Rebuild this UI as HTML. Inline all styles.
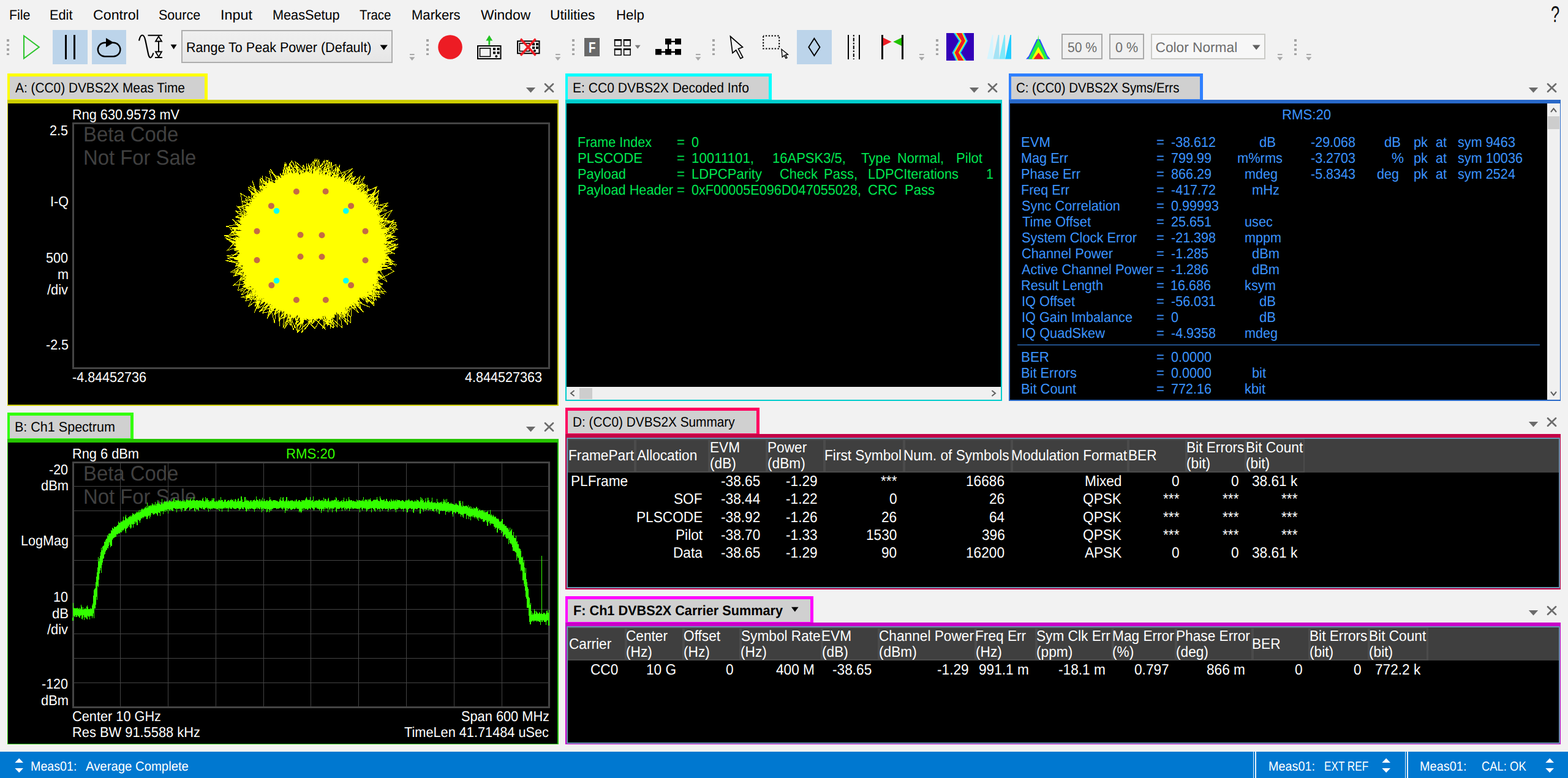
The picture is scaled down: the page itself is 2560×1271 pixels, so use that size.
<!DOCTYPE html>
<html lang="en"><head><meta charset="utf-8"><title>VSA DVBS2X</title><style>
html,body{margin:0;padding:0;}
body{width:2560px;height:1271px;overflow:hidden;background:#f2f2f2;position:relative;font-family:"Liberation Sans",sans-serif;}
.r{position:absolute;display:block;}
.t{position:absolute;white-space:pre;line-height:1;transform-origin:0 0;font-family:"Liberation Sans",sans-serif;text-rendering:geometricPrecision;}
</style></head><body>
<div id="menubar">
<span class="t" style="left:14.79px;top:13px;font-size:22.7px;color:#000;transform:scaleX(0.9434);">File</span>
<span class="t" style="left:80.96px;top:13px;font-size:22.7px;color:#000;transform:scaleX(0.9592);">Edit</span>
<span class="t" style="left:152.04px;top:13px;font-size:22.7px;color:#000;transform:scaleX(1.0229);">Control</span>
<span class="t" style="left:259.23px;top:13px;font-size:22.7px;color:#000;transform:scaleX(0.9470);">Source</span>
<span class="t" style="left:360.10px;top:13px;font-size:22.7px;color:#000;transform:scaleX(1.0282);">Input</span>
<span class="t" style="left:444.97px;top:13px;font-size:22.7px;color:#000;transform:scaleX(0.9551);">MeasSetup</span>
<span class="t" style="left:587.29px;top:13px;font-size:22.7px;color:#000;transform:scaleX(0.8990);">Trace</span>
<span class="t" style="left:671.94px;top:13px;font-size:22.7px;color:#000;transform:scaleX(0.9718);">Markers</span>
<span class="t" style="left:784.59px;top:13px;font-size:22.7px;color:#000;transform:scaleX(1.0050);">Window</span>
<span class="t" style="left:898.49px;top:13px;font-size:22.7px;color:#000;transform:scaleX(1.0055);">Utilities</span>
<span class="t" style="left:1005.92px;top:13px;font-size:22.7px;color:#000;transform:scaleX(0.9812);">Help</span>
<span class="t" style="left:2532.27px;top:5px;font-size:37.2px;color:#111;transform:scaleX(0.6888);">?</span>
</div>
<div id="toolbar">
<div class="r" style="left:11px;top:64px;width:4px;height:3.5px;background:#a3a3a3;"></div>
<div class="r" style="left:11px;top:71.5px;width:4px;height:3.5px;background:#a3a3a3;"></div>
<div class="r" style="left:11px;top:79px;width:4px;height:3.5px;background:#a3a3a3;"></div>
<div class="r" style="left:11px;top:86.5px;width:4px;height:3.5px;background:#a3a3a3;"></div>
<div class="r" style="left:696px;top:64px;width:4px;height:3.5px;background:#a3a3a3;"></div>
<div class="r" style="left:696px;top:71.5px;width:4px;height:3.5px;background:#a3a3a3;"></div>
<div class="r" style="left:696px;top:79px;width:4px;height:3.5px;background:#a3a3a3;"></div>
<div class="r" style="left:696px;top:86.5px;width:4px;height:3.5px;background:#a3a3a3;"></div>
<div class="r" style="left:934px;top:64px;width:4px;height:3.5px;background:#a3a3a3;"></div>
<div class="r" style="left:934px;top:71.5px;width:4px;height:3.5px;background:#a3a3a3;"></div>
<div class="r" style="left:934px;top:79px;width:4px;height:3.5px;background:#a3a3a3;"></div>
<div class="r" style="left:934px;top:86.5px;width:4px;height:3.5px;background:#a3a3a3;"></div>
<div class="r" style="left:1163px;top:64px;width:4px;height:3.5px;background:#a3a3a3;"></div>
<div class="r" style="left:1163px;top:71.5px;width:4px;height:3.5px;background:#a3a3a3;"></div>
<div class="r" style="left:1163px;top:79px;width:4px;height:3.5px;background:#a3a3a3;"></div>
<div class="r" style="left:1163px;top:86.5px;width:4px;height:3.5px;background:#a3a3a3;"></div>
<div class="r" style="left:1528px;top:64px;width:4px;height:3.5px;background:#a3a3a3;"></div>
<div class="r" style="left:1528px;top:71.5px;width:4px;height:3.5px;background:#a3a3a3;"></div>
<div class="r" style="left:1528px;top:79px;width:4px;height:3.5px;background:#a3a3a3;"></div>
<div class="r" style="left:1528px;top:86.5px;width:4px;height:3.5px;background:#a3a3a3;"></div>
<div class="r" style="left:2113px;top:64px;width:4px;height:3.5px;background:#a3a3a3;"></div>
<div class="r" style="left:2113px;top:71.5px;width:4px;height:3.5px;background:#a3a3a3;"></div>
<div class="r" style="left:2113px;top:79px;width:4px;height:3.5px;background:#a3a3a3;"></div>
<div class="r" style="left:2113px;top:86.5px;width:4px;height:3.5px;background:#a3a3a3;"></div>
<svg class="r" style="left:667.5px;top:87px" width="10" height="13" viewBox="0 0 10 13"><rect x="1" y="1" width="7.5" height="2" fill="#a8a8a8"/><path d="M0.2 6.3h9.2l-4.6 5.6z" fill="#a8a8a8"/></svg>
<svg class="r" style="left:906px;top:87px" width="10" height="13" viewBox="0 0 10 13"><rect x="1" y="1" width="7.5" height="2" fill="#a8a8a8"/><path d="M0.2 6.3h9.2l-4.6 5.6z" fill="#a8a8a8"/></svg>
<svg class="r" style="left:1135px;top:87px" width="10" height="13" viewBox="0 0 10 13"><rect x="1" y="1" width="7.5" height="2" fill="#a8a8a8"/><path d="M0.2 6.3h9.2l-4.6 5.6z" fill="#a8a8a8"/></svg>
<svg class="r" style="left:1500px;top:87px" width="10" height="13" viewBox="0 0 10 13"><rect x="1" y="1" width="7.5" height="2" fill="#a8a8a8"/><path d="M0.2 6.3h9.2l-4.6 5.6z" fill="#a8a8a8"/></svg>
<svg class="r" style="left:2085px;top:87px" width="10" height="13" viewBox="0 0 10 13"><rect x="1" y="1" width="7.5" height="2" fill="#a8a8a8"/><path d="M0.2 6.3h9.2l-4.6 5.6z" fill="#a8a8a8"/></svg>
<svg class="r" style="left:2132px;top:87px" width="10" height="13" viewBox="0 0 10 13"><rect x="1" y="1" width="7.5" height="2" fill="#a8a8a8"/><path d="M0.2 6.3h9.2l-4.6 5.6z" fill="#a8a8a8"/></svg>
<svg class="r" style="left:34px;top:52px" width="36" height="50" viewBox="0 0 36 50"><path d="M5 6.5 L29.8 25 L5 43.5 Z" fill="none" stroke="#2fc62f" stroke-width="2.1" stroke-linejoin="miter"/></svg>
<div class="r" style="left:86px;top:49px;width:57px;height:56px;background:#bcd4ea;"></div>
<div class="r" style="left:106px;top:57.3px;width:3.3px;height:39.4px;background:#000;"></div>
<div class="r" style="left:119.8px;top:57.3px;width:3.3px;height:39.4px;background:#000;"></div>
<div class="r" style="left:150px;top:49px;width:56px;height:56px;background:#bcd4ea;"></div>
<svg class="r" style="left:150px;top:49px" width="56" height="56" viewBox="0 0 56 56"><rect x="9.8" y="20.8" width="36.6" height="22.4" rx="11.2" ry="11.2" fill="none" stroke="#000" stroke-width="2.4"/><path d="M23 13 L35.5 20.6 L23 28.2 Z" fill="#000"/></svg>
<svg class="r" style="left:222px;top:52px" width="50" height="50" viewBox="0 0 50 50"><path d="M5 14.5 C7.5 2.5 13 2.5 15.5 14.5 L19.5 33.5 C21.5 44.5 25 45 28.5 34.5" fill="none" stroke="#000" stroke-width="2.2"/><path d="M19.5 5.8h23.5M31 42h12" stroke="#000" stroke-width="2" fill="none"/><path d="M37 14v23" stroke="#000" stroke-width="2" fill="none"/><path d="M37 7.5 L42 15.5 H32 Z M37 41 L42 32.5 H32 Z" fill="#f2f2f2" stroke="#000" stroke-width="1.8"/></svg>
<svg class="r" style="left:278px;top:72px" width="12" height="10" viewBox="0 0 12 10"><path d="M0.6 0.8h10l-5 7.8z" fill="#000"/></svg>
<div class="r" style="left:296px;top:49px;width:345px;height:54px;background:linear-gradient(#f0f0f0,#e6e6e6);box-sizing:border-box;border:2px solid #adadad;"></div>
<span class="t" style="left:303.98px;top:66px;font-size:22.7px;color:#000;transform:scaleX(0.9495);">Range To Peak Power (Default)</span>
<svg class="r" style="left:620px;top:72.5px" width="14" height="10" viewBox="0 0 14 10"><path d="M0.5 0.5h12.4l-6.2 8.3z" fill="#000"/></svg>
<svg class="r" style="left:714px;top:56px" width="42" height="42" viewBox="0 0 42 42"><circle cx="21" cy="21" r="19.8" fill="#ed1c24"/></svg>
<svg class="r" style="left:776px;top:54px" width="46" height="46" viewBox="0 0 46 46"><path d="M22.8 3.5 L28.3 12.6 H24.2 V19.5 H21.4 V12.6 H17.3 Z" fill="#22c322"/><rect x="4" y="21" width="37.5" height="21" fill="none" stroke="#000" stroke-width="2"/><rect x="7.5" y="24.8" width="17" height="13.6" fill="none" stroke="#000" stroke-width="1.6"/><rect x="29" y="24" width="4" height="4" fill="#000"/><rect x="35.5" y="24" width="4" height="4" fill="#000"/><rect x="29" y="30.3" width="4" height="4" fill="#000"/><rect x="35.5" y="30.3" width="4" height="4" fill="#000"/><circle cx="34.3" cy="38" r="2" fill="#000"/></svg>
<svg class="r" style="left:840px;top:58px" width="46" height="38" viewBox="0 0 46 38"><rect x="5" y="9.2" width="35.5" height="20" fill="none" stroke="#000" stroke-width="2"/><rect x="8.3" y="12.8" width="16" height="12.8" fill="none" stroke="#000" stroke-width="1.6"/><rect x="29" y="12.2" width="4" height="4" fill="#000"/><rect x="35" y="12.2" width="4" height="4" fill="#000"/><rect x="29" y="18" width="4" height="4" fill="#000"/><rect x="35" y="18" width="4" height="4" fill="#000"/><circle cx="33" cy="25" r="2" fill="#000"/><path d="M10 5.5 L34.5 32.5 M34.5 5.5 L10 32.5" stroke="#ed1c24" stroke-width="3.6" fill="none"/></svg>
<div class="r" style="left:954px;top:62px;width:25px;height:30px;background:#696969;"></div>
<span class="t" style="left:960.98px;top:67px;font-size:24.7px;color:#fff;font-weight:700;transform:scaleX(0.7621);">F</span>
<svg class="r" style="left:1000px;top:62px" width="32" height="30" viewBox="0 0 32 30"><rect x="3.6" y="2.9" width="10.5" height="10" fill="none" stroke="#000" stroke-width="1.5"/><rect x="2.85" y="2.15" width="12" height="2.6" fill="#000"/><rect x="3.6" y="18" width="10.5" height="10" fill="none" stroke="#000" stroke-width="1.5"/><rect x="2.85" y="17.25" width="12" height="2.6" fill="#000"/><rect x="18.6" y="2.9" width="10.5" height="10" fill="none" stroke="#000" stroke-width="1.5"/><rect x="17.85" y="2.15" width="12" height="2.6" fill="#000"/><rect x="18.6" y="18" width="10.5" height="10" fill="none" stroke="#000" stroke-width="1.5"/><rect x="17.85" y="17.25" width="12" height="2.6" fill="#000"/></svg>
<svg class="r" style="left:1036px;top:73px" width="11" height="8" viewBox="0 0 11 8"><path d="M0.6 0.8h9l-4.5 5.9z" fill="#7a7a7a"/></svg>
<svg class="r" style="left:1068px;top:60px" width="46" height="32" viewBox="0 0 46 32"><rect x="18" y="3" width="10" height="9.6" fill="#000"/><rect x="34" y="3" width="10" height="9.6" fill="#000"/><rect x="2" y="20" width="10" height="9.6" fill="#000"/><rect x="18" y="20" width="10" height="9.6" fill="#000"/><rect x="34" y="20" width="10" height="9.6" fill="#000"/><path d="M23 7.8H40M23 8V25M6 24.8H40" stroke="#000" stroke-width="2.2" fill="none"/></svg>
<svg class="r" style="left:1188px;top:55px" width="30" height="44" viewBox="0 0 30 44"><path d="M4.5 4.5 L24.5 22 L17.5 24.8 L24.8 38.6 L21 40.6 L13.7 26.8 L8 31.6 Z" fill="#f2f2f2" stroke="#000" stroke-width="1.7" stroke-linejoin="miter"/></svg>
<svg class="r" style="left:1243px;top:55px" width="46" height="42" viewBox="0 0 46 42"><rect x="3.2" y="3.4" width="26" height="21" fill="none" stroke="#000" stroke-width="2" stroke-dasharray="2.4 2.45" stroke-dashoffset="1.2"/><path d="M33 25.5 L43.5 34 L39.5 34.6 L42 39.4 L40 40.4 L37.6 35.6 L34.2 38.2 Z" fill="#f2f2f2" stroke="#000" stroke-width="1.4"/></svg>
<div class="r" style="left:1301px;top:49px;width:57px;height:56px;background:#bcd4ea;"></div>
<svg class="r" style="left:1301px;top:49px" width="57" height="56" viewBox="0 0 57 56"><path d="M28.4 13.7 L37.5 27.9 L28.4 42.1 L19.3 27.9 Z" fill="none" stroke="#000" stroke-width="1.9"/></svg>
<div class="r" style="left:1383.8px;top:57px;width:2px;height:39.6px;background:#000;"></div>
<div class="r" style="left:1402.2px;top:57px;width:2px;height:39.6px;background:#000;"></div>
<svg class="r" style="left:1392px;top:56px" width="4" height="42" viewBox="0 0 4 42"><path d="M1.8 1 V41" stroke="#000" stroke-width="2" stroke-dasharray="2.4 2.4 5.6 2.4" fill="none"/></svg>
<div class="r" style="left:1438.5px;top:57px;width:3.2px;height:39.6px;background:#000;"></div>
<div class="r" style="left:1472px;top:57px;width:3.2px;height:39.6px;background:#000;"></div>
<svg class="r" style="left:1441px;top:60px" width="32" height="16" viewBox="0 0 32 16"><path d="M0.7 1.5 L14.5 8.3 L0.7 15 Z" fill="#ed1c24"/><path d="M31 1.5 L17.3 8.3 L31 15 Z" fill="#22c400"/></svg>
<svg class="r" style="left:1545px;top:54px" width="45" height="45" viewBox="0 0 45 45"><rect width="45" height="45" fill="#3300b8"/><path d="M12 0 H29 L35 12.8 L24 32 L32.5 45 H15.5 L9.5 32 L20.5 12.8 Z" fill="#19d3ff"/><path d="M14.8 0 H26.6 L32.5 12.8 L21.5 32 L30 45 H18.2 L12.3 32 L23.3 12.8 Z" fill="#ffff00"/><path d="M16.3 0 H25.2 L31 12.8 L20 32 L28.5 45 H19.6 L13.8 32 L24.8 12.8 Z" fill="#ed1c24"/></svg>
<svg class="r" style="left:1611px;top:56px" width="42" height="42" viewBox="0 0 42 42"><path d="M0.5 40.5 L9 1 H10.5 V40.5 Z" fill="#d5f5ff"/><path d="M10.5 40.5 L18.8 1 H20.3 V40.5 Z" fill="#a4e3f5"/><path d="M20.3 40.5 L28.6 1 H30.1 V40.5 Z" fill="#7ee9fa"/><path d="M30.1 40.5 L38.4 1 H40 V40.5 Z" fill="#22ccff"/></svg>
<svg class="r" style="left:1674px;top:56px" width="42" height="42" viewBox="0 0 42 42"><path d="M1 40.6 L5.5 35.5 L18.6 8 H24 L36 34.5 L40.8 40.6 Z" fill="#2a50ff"/><path d="M5 40.6 L20.4 9 L21.2 0.8 L22 9 L37 40.6 Z" fill="#22ee44"/><path d="M10.5 40.6 L13 36 L21.2 20.5 L29.5 36 L31 40.6 Z" fill="#ffff00"/><path d="M13.5 40.6 L16 37 L21.5 30 L27 37 L29.5 40.6 Z" fill="#ed1c24"/></svg>
<div class="r" style="left:1733px;top:55px;width:67px;height:42px;background:#f0f0f0;box-sizing:border-box;border:2px solid #a9a9a9;"></div>
<span class="t" style="left:1742.85px;top:66px;font-size:22.7px;color:#6d6d6d;transform:scaleX(0.9310);">50 %</span>
<div class="r" style="left:1811px;top:55px;width:57px;height:42px;background:#f0f0f0;box-sizing:border-box;border:2px solid #a9a9a9;"></div>
<span class="t" style="left:1820.84px;top:66px;font-size:22.7px;color:#6d6d6d;transform:scaleX(0.9505);">0 %</span>
<div class="r" style="left:1879px;top:55px;width:187px;height:42px;background:#f7f7f7;box-sizing:border-box;border:2px solid #cacac6;"></div>
<span class="t" style="left:1886.56px;top:66px;font-size:22.7px;color:#6d6d6d;">Color Normal</span>
<svg class="r" style="left:2044px;top:72.5px" width="15" height="10" viewBox="0 0 15 10"><path d="M0.8 0.6h12.8l-6.4 8z" fill="#606060"/></svg>
</div>
<div id="panelA">
<div class="r" style="left:12px;top:120px;width:327px;height:43px;background:#ffff00;"></div>
<div class="r" style="left:16px;top:124.6px;width:318.4px;height:37.2px;background:#d0d0d0;"></div>
<span class="t" style="left:24.70px;top:132px;font-size:22.7px;color:#000;transform:scaleX(0.9190);">A: (CC0) DVBS2X Meas Time</span>
<div class="r" style="left:12px;top:162.8px;width:900px;height:500.2px;background:#cccc00;"></div>
<div class="r" style="left:12px;top:162.8px;width:900px;height:6.2px;background:#cccc00;"></div>
<div class="r" style="left:13px;top:169px;width:897px;height:492px;background:#000;"></div>
<svg class="r" style="left:858px;top:135px" width="50" height="18" viewBox="0 0 50 18"><path d="M0.8 8 H16.2 L8.5 16.4 Z" fill="#6b6b6b"/><path d="M32 2.2 L45 14.8 M45 2.2 L32 14.8" stroke="#6b6b6b" stroke-width="2.7" stroke-linecap="round" fill="none"/></svg>
</div>
<div id="panelB">
<div class="r" style="left:12px;top:674px;width:205.6px;height:43px;background:#33ff0d;"></div>
<div class="r" style="left:16px;top:678.6px;width:197.0px;height:37.2px;background:#d0d0d0;"></div>
<span class="t" style="left:23.68px;top:686px;font-size:22.7px;color:#000;transform:scaleX(0.9489);">B: Ch1 Spectrum</span>
<div class="r" style="left:12px;top:716.8px;width:900px;height:499.20000000000005px;background:#26c400;"></div>
<div class="r" style="left:12px;top:716.8px;width:900px;height:6.2px;background:#26c400;"></div>
<div class="r" style="left:13px;top:723px;width:897px;height:492px;background:#000;"></div>
<svg class="r" style="left:858px;top:689px" width="50" height="18" viewBox="0 0 50 18"><path d="M0.8 8 H16.2 L8.5 16.4 Z" fill="#6b6b6b"/><path d="M32 2.2 L45 14.8 M45 2.2 L32 14.8" stroke="#6b6b6b" stroke-width="2.7" stroke-linecap="round" fill="none"/></svg>
</div>
<div id="panelE">
<div class="r" style="left:923px;top:120px;width:337px;height:43px;background:#00ffff;"></div>
<div class="r" style="left:927px;top:124.6px;width:328.4px;height:37.2px;background:#d0d0d0;"></div>
<span class="t" style="left:935.42px;top:132px;font-size:22.7px;color:#000;transform:scaleX(0.9279);">E: CC0 DVBS2X Decoded Info</span>
<div class="r" style="left:923px;top:162.8px;width:713px;height:492.2px;background:#00cccc;"></div>
<div class="r" style="left:923px;top:162.8px;width:713px;height:6.2px;background:#00cccc;"></div>
<div class="r" style="left:925px;top:169px;width:709px;height:484px;background:#000;"></div>
<svg class="r" style="left:1582px;top:135px" width="50" height="18" viewBox="0 0 50 18"><path d="M0.8 8 H16.2 L8.5 16.4 Z" fill="#6b6b6b"/><path d="M32 2.2 L45 14.8 M45 2.2 L32 14.8" stroke="#6b6b6b" stroke-width="2.7" stroke-linecap="round" fill="none"/></svg>
</div>
<div id="panelC">
<div class="r" style="left:1647px;top:120px;width:317px;height:43px;background:#2f80ff;"></div>
<div class="r" style="left:1651px;top:124.6px;width:308.4px;height:37.2px;background:#d0d0d0;"></div>
<span class="t" style="left:1659.48px;top:132px;font-size:22.7px;color:#000;transform:scaleX(0.8991);">C: (CC0) DVBS2X Syms/Errs</span>
<div class="r" style="left:1647px;top:162.8px;width:901px;height:492.2px;background:#2868c8;"></div>
<div class="r" style="left:1647px;top:162.8px;width:901px;height:6.2px;background:#2868c8;"></div>
<div class="r" style="left:1649px;top:169px;width:898px;height:484px;background:#000;"></div>
<svg class="r" style="left:2495px;top:135px" width="50" height="18" viewBox="0 0 50 18"><path d="M0.8 8 H16.2 L8.5 16.4 Z" fill="#6b6b6b"/><path d="M32 2.2 L45 14.8 M45 2.2 L32 14.8" stroke="#6b6b6b" stroke-width="2.7" stroke-linecap="round" fill="none"/></svg>
</div>
<div id="panelD">
<div class="r" style="left:923px;top:666px;width:317px;height:43px;background:#ff0060;"></div>
<div class="r" style="left:927px;top:670.6px;width:308.4px;height:37.2px;background:#d0d0d0;"></div>
<span class="t" style="left:935.04px;top:678px;font-size:22.7px;color:#000;transform:scaleX(0.9166);">D: (CC0) DVBS2X Summary</span>
<div class="r" style="left:923px;top:708.8px;width:1625px;height:254.20000000000005px;background:#c40046;"></div>
<div class="r" style="left:923px;top:708.8px;width:1625px;height:6.2px;background:#c40046;"></div>
<div class="r" style="left:925px;top:715px;width:1622px;height:246px;background:#000;"></div>
<svg class="r" style="left:2495px;top:681px" width="50" height="18" viewBox="0 0 50 18"><path d="M0.8 8 H16.2 L8.5 16.4 Z" fill="#6b6b6b"/><path d="M32 2.2 L45 14.8 M45 2.2 L32 14.8" stroke="#6b6b6b" stroke-width="2.7" stroke-linecap="round" fill="none"/></svg>
</div>
<div id="panelF">
<div class="r" style="left:923px;top:974px;width:405px;height:43px;background:#ff00ff;"></div>
<div class="r" style="left:927px;top:978.6px;width:396.4px;height:37.2px;background:#d0d0d0;"></div>
<span class="t" style="left:935.69px;top:986px;font-size:22.7px;color:#000;font-weight:700;transform:scaleX(0.9554);">F: Ch1 DVBS2X Carrier Summary</span>
<div class="r" style="left:923px;top:1016.8px;width:1625px;height:199.20000000000005px;background:#c800c8;"></div>
<div class="r" style="left:923px;top:1016.8px;width:1625px;height:6.2px;background:#c800c8;"></div>
<div class="r" style="left:925px;top:1023px;width:1622px;height:192px;background:#000;"></div>
<svg class="r" style="left:2495px;top:989px" width="50" height="18" viewBox="0 0 50 18"><path d="M0.8 8 H16.2 L8.5 16.4 Z" fill="#6b6b6b"/><path d="M32 2.2 L45 14.8 M45 2.2 L32 14.8" stroke="#6b6b6b" stroke-width="2.7" stroke-linecap="round" fill="none"/></svg>
</div>
<svg class="r" style="left:1291px;top:991px" width="14" height="10" viewBox="0 0 14 10"><path d="M1 0.8h11.6l-5.8 7.8z" fill="#000"/></svg>
<div id="decoded">
<span class="t" style="left:943.38px;top:221px;font-size:23.3px;color:#00e650;transform:scaleX(0.9251);">Frame Index</span>
<span class="t" style="left:943.33px;top:247px;font-size:23.3px;color:#00e650;transform:scaleX(0.9519);">PLSCODE</span>
<span class="t" style="left:943.35px;top:273px;font-size:23.3px;color:#00e650;transform:scaleX(0.9382);">Payload</span>
<span class="t" style="left:943.36px;top:299px;font-size:23.3px;color:#00e650;transform:scaleX(0.9336);">Payload Header</span>
<span class="t" style="left:1104.99px;top:221px;font-size:23.3px;color:#00e650;transform:scaleX(0.9554);">=</span>
<span class="t" style="left:1104.99px;top:247px;font-size:23.3px;color:#00e650;transform:scaleX(0.9554);">=</span>
<span class="t" style="left:1104.99px;top:273px;font-size:23.3px;color:#00e650;transform:scaleX(0.9554);">=</span>
<span class="t" style="left:1104.99px;top:299px;font-size:23.3px;color:#00e650;transform:scaleX(0.9554);">=</span>
<span class="t" style="left:1129.24px;top:221px;font-size:23.3px;color:#00e650;transform:scaleX(0.9260);">0</span>
<span class="t" style="left:1129.43px;top:247px;font-size:23.3px;color:#00e650;transform:scaleX(0.9561);">10011101,</span>
<span class="t" style="left:1261.45px;top:247px;font-size:23.3px;color:#00e650;transform:scaleX(0.9453);">16APSK3/5,</span>
<span class="t" style="left:1405.66px;top:247px;font-size:23.3px;color:#00e650;transform:scaleX(0.9502);">Type</span>
<span class="t" style="left:1465.36px;top:247px;font-size:23.3px;color:#00e650;transform:scaleX(0.9318);">Normal,</span>
<span class="t" style="left:1561.33px;top:247px;font-size:23.3px;color:#00e650;transform:scaleX(0.9486);">Pilot</span>
<span class="t" style="left:1129.34px;top:273px;font-size:23.3px;color:#00e650;transform:scaleX(0.9448);">LDPCParity</span>
<span class="t" style="left:1273.01px;top:273px;font-size:23.3px;color:#00e650;transform:scaleX(0.9388);">Check</span>
<span class="t" style="left:1345.34px;top:273px;font-size:23.3px;color:#00e650;transform:scaleX(0.9438);">Pass,</span>
<span class="t" style="left:1417.35px;top:273px;font-size:23.3px;color:#00e650;transform:scaleX(0.9367);">LDPCIterations</span>
<span class="t" style="left:1610.48px;top:273px;font-size:23.3px;color:#00e650;transform:scaleX(0.9260);">1</span>
<span class="t" style="left:1129.23px;top:299px;font-size:23.3px;color:#00e650;transform:scaleX(0.9296);">0xF00005E096D047055028,</span>
<span class="t" style="left:1416.99px;top:299px;font-size:23.3px;color:#00e650;transform:scaleX(0.9509);">CRC</span>
<span class="t" style="left:1477.34px;top:299px;font-size:23.3px;color:#00e650;transform:scaleX(0.9459);">Pass</span>
<div class="r" style="left:925px;top:632px;width:709px;height:21px;background:#f0f0f0;"></div>
<div class="r" style="left:946px;top:633.5px;width:21px;height:18px;background:#cdcdcd;"></div>
<svg class="r" style="left:929px;top:636px" width="12" height="13" viewBox="0 0 12 13"><path d="M8.6 2 L3 6.5 L8.6 11" fill="none" stroke="#606060" stroke-width="2"/></svg>
<svg class="r" style="left:1616px;top:636px" width="12" height="13" viewBox="0 0 12 13"><path d="M3.4 2 L9 6.5 L3.4 11" fill="none" stroke="#606060" stroke-width="2"/></svg>
</div>
<div id="symserrs">
<span class="t" style="left:2093.33px;top:176px;font-size:23.3px;color:#3c94ff;transform:scaleX(0.9517);">RMS:20</span>
<span class="t" style="left:1667.33px;top:221px;font-size:23.3px;color:#3c94ff;transform:scaleX(0.9506);">EVM</span>
<span class="t" style="left:1887.99px;top:221px;font-size:23.3px;color:#3c94ff;transform:scaleX(0.9554);">=</span>
<span class="t" style="left:1912.13px;top:221px;font-size:23.3px;color:#3c94ff;transform:scaleX(0.9237);">-38.612</span>
<span class="t" style="left:2056.22px;top:221px;font-size:23.3px;color:#3c94ff;transform:scaleX(0.9473);">dB</span>
<span class="t" style="left:2140.13px;top:221px;font-size:23.3px;color:#3c94ff;transform:scaleX(0.9237);">-29.068</span>
<span class="t" style="left:2260.22px;top:221px;font-size:23.3px;color:#3c94ff;transform:scaleX(0.9473);">dB</span>
<span class="t" style="left:2307.68px;top:221px;font-size:23.3px;color:#3c94ff;transform:scaleX(0.9346);">pk</span>
<span class="t" style="left:2344.24px;top:221px;font-size:23.3px;color:#3c94ff;transform:scaleX(0.9263);">at</span>
<span class="t" style="left:2380.45px;top:221px;font-size:23.3px;color:#3c94ff;transform:scaleX(0.9305);">sym 9463</span>
<span class="t" style="left:1667.37px;top:247px;font-size:23.3px;color:#3c94ff;transform:scaleX(0.9293);">Mag Err</span>
<span class="t" style="left:1887.99px;top:247px;font-size:23.3px;color:#3c94ff;transform:scaleX(0.9554);">=</span>
<span class="t" style="left:1912.02px;top:247px;font-size:23.3px;color:#3c94ff;transform:scaleX(0.9261);">799.99</span>
<span class="t" style="left:2019.68px;top:247px;font-size:23.3px;color:#3c94ff;transform:scaleX(0.9373);">m%rms</span>
<span class="t" style="left:2140.13px;top:247px;font-size:23.3px;color:#3c94ff;transform:scaleX(0.9237);">-3.2703</span>
<span class="t" style="left:2272.31px;top:247px;font-size:23.3px;color:#3c94ff;transform:scaleX(0.9654);">%</span>
<span class="t" style="left:2307.68px;top:247px;font-size:23.3px;color:#3c94ff;transform:scaleX(0.9346);">pk</span>
<span class="t" style="left:2344.24px;top:247px;font-size:23.3px;color:#3c94ff;transform:scaleX(0.9263);">at</span>
<span class="t" style="left:2380.45px;top:247px;font-size:23.3px;color:#3c94ff;transform:scaleX(0.9300);">sym 10036</span>
<span class="t" style="left:1667.35px;top:273px;font-size:23.3px;color:#3c94ff;transform:scaleX(0.9363);">Phase Err</span>
<span class="t" style="left:1887.99px;top:273px;font-size:23.3px;color:#3c94ff;transform:scaleX(0.9554);">=</span>
<span class="t" style="left:1912.13px;top:273px;font-size:23.3px;color:#3c94ff;transform:scaleX(0.9261);">866.29</span>
<span class="t" style="left:2031.70px;top:273px;font-size:23.3px;color:#3c94ff;transform:scaleX(0.9265);">mdeg</span>
<span class="t" style="left:2140.13px;top:273px;font-size:23.3px;color:#3c94ff;transform:scaleX(0.9237);">-5.8343</span>
<span class="t" style="left:2248.24px;top:273px;font-size:23.3px;color:#3c94ff;transform:scaleX(0.9260);">deg</span>
<span class="t" style="left:2307.68px;top:273px;font-size:23.3px;color:#3c94ff;transform:scaleX(0.9346);">pk</span>
<span class="t" style="left:2344.24px;top:273px;font-size:23.3px;color:#3c94ff;transform:scaleX(0.9263);">at</span>
<span class="t" style="left:2380.45px;top:273px;font-size:23.3px;color:#3c94ff;transform:scaleX(0.9305);">sym 2524</span>
<span class="t" style="left:1667.38px;top:299px;font-size:23.3px;color:#3c94ff;transform:scaleX(0.9246);">Freq Err</span>
<span class="t" style="left:1887.99px;top:299px;font-size:23.3px;color:#3c94ff;transform:scaleX(0.9554);">=</span>
<span class="t" style="left:1912.13px;top:299px;font-size:23.3px;color:#3c94ff;transform:scaleX(0.9237);">-417.72</span>
<span class="t" style="left:2043.68px;top:299px;font-size:23.3px;color:#3c94ff;transform:scaleX(0.9397);">mHz</span>
<span class="t" style="left:1668.12px;top:325px;font-size:23.3px;color:#3c94ff;transform:scaleX(0.9347);">Sync Correlation</span>
<span class="t" style="left:1887.99px;top:325px;font-size:23.3px;color:#3c94ff;transform:scaleX(0.9554);">=</span>
<span class="t" style="left:1912.24px;top:325px;font-size:23.3px;color:#3c94ff;transform:scaleX(0.9261);">0.99993</span>
<span class="t" style="left:1668.66px;top:351px;font-size:23.3px;color:#3c94ff;transform:scaleX(0.9402);">Time Offset</span>
<span class="t" style="left:1887.99px;top:351px;font-size:23.3px;color:#3c94ff;transform:scaleX(0.9554);">=</span>
<span class="t" style="left:1912.02px;top:351px;font-size:23.3px;color:#3c94ff;transform:scaleX(0.9261);">25.651</span>
<span class="t" style="left:2031.68px;top:351px;font-size:23.3px;color:#3c94ff;transform:scaleX(0.9346);">usec</span>
<span class="t" style="left:1668.12px;top:377px;font-size:23.3px;color:#3c94ff;transform:scaleX(0.9368);">System Clock Error</span>
<span class="t" style="left:1887.99px;top:377px;font-size:23.3px;color:#3c94ff;transform:scaleX(0.9554);">=</span>
<span class="t" style="left:1912.13px;top:377px;font-size:23.3px;color:#3c94ff;transform:scaleX(0.9237);">-21.398</span>
<span class="t" style="left:2031.70px;top:377px;font-size:23.3px;color:#3c94ff;transform:scaleX(0.9268);">mppm</span>
<span class="t" style="left:1668.01px;top:403px;font-size:23.3px;color:#3c94ff;transform:scaleX(0.9352);">Channel Power</span>
<span class="t" style="left:1887.99px;top:403px;font-size:23.3px;color:#3c94ff;transform:scaleX(0.9554);">=</span>
<span class="t" style="left:1912.13px;top:403px;font-size:23.3px;color:#3c94ff;transform:scaleX(0.9233);">-1.285</span>
<span class="t" style="left:2044.22px;top:403px;font-size:23.3px;color:#3c94ff;transform:scaleX(0.9392);">dBm</span>
<span class="t" style="left:1668.10px;top:429px;font-size:23.3px;color:#3c94ff;transform:scaleX(0.9379);">Active Channel Power</span>
<span class="t" style="left:1887.99px;top:429px;font-size:23.3px;color:#3c94ff;transform:scaleX(0.9554);">=</span>
<span class="t" style="left:1912.13px;top:429px;font-size:23.3px;color:#3c94ff;transform:scaleX(0.9233);">-1.286</span>
<span class="t" style="left:2044.22px;top:429px;font-size:23.3px;color:#3c94ff;transform:scaleX(0.9392);">dBm</span>
<span class="t" style="left:1667.36px;top:455px;font-size:23.3px;color:#3c94ff;transform:scaleX(0.9319);">Result Length</span>
<span class="t" style="left:1887.99px;top:455px;font-size:23.3px;color:#3c94ff;transform:scaleX(0.9554);">=</span>
<span class="t" style="left:1911.48px;top:455px;font-size:23.3px;color:#3c94ff;transform:scaleX(0.9261);">16.686</span>
<span class="t" style="left:2031.68px;top:455px;font-size:23.3px;color:#3c94ff;transform:scaleX(0.9382);">ksym</span>
<span class="t" style="left:1668.13px;top:481px;font-size:23.3px;color:#3c94ff;transform:scaleX(0.9375);">IQ Offset</span>
<span class="t" style="left:1887.99px;top:481px;font-size:23.3px;color:#3c94ff;transform:scaleX(0.9554);">=</span>
<span class="t" style="left:1912.13px;top:481px;font-size:23.3px;color:#3c94ff;transform:scaleX(0.9237);">-56.031</span>
<span class="t" style="left:2056.22px;top:481px;font-size:23.3px;color:#3c94ff;transform:scaleX(0.9473);">dB</span>
<span class="t" style="left:1668.15px;top:507px;font-size:23.3px;color:#3c94ff;transform:scaleX(0.9317);">IQ Gain Imbalance</span>
<span class="t" style="left:1887.99px;top:507px;font-size:23.3px;color:#3c94ff;transform:scaleX(0.9554);">=</span>
<span class="t" style="left:1912.24px;top:507px;font-size:23.3px;color:#3c94ff;transform:scaleX(0.9260);">0</span>
<span class="t" style="left:2056.22px;top:507px;font-size:23.3px;color:#3c94ff;transform:scaleX(0.9473);">dB</span>
<span class="t" style="left:1668.13px;top:533px;font-size:23.3px;color:#3c94ff;transform:scaleX(0.9376);">IQ QuadSkew</span>
<span class="t" style="left:1887.99px;top:533px;font-size:23.3px;color:#3c94ff;transform:scaleX(0.9554);">=</span>
<span class="t" style="left:1912.13px;top:533px;font-size:23.3px;color:#3c94ff;transform:scaleX(0.9237);">-4.9358</span>
<span class="t" style="left:2031.70px;top:533px;font-size:23.3px;color:#3c94ff;transform:scaleX(0.9265);">mdeg</span>
<div class="r" style="left:1661px;top:562.6px;width:853px;height:1.4px;background:#3c94ff;"></div>
<span class="t" style="left:1667.31px;top:572px;font-size:23.3px;color:#3c94ff;transform:scaleX(0.9601);">BER</span>
<span class="t" style="left:1887.99px;top:572px;font-size:23.3px;color:#3c94ff;transform:scaleX(0.9554);">=</span>
<span class="t" style="left:1912.24px;top:572px;font-size:23.3px;color:#3c94ff;transform:scaleX(0.9261);">0.0000</span>
<span class="t" style="left:1667.35px;top:598px;font-size:23.3px;color:#3c94ff;transform:scaleX(0.9372);">Bit Errors</span>
<span class="t" style="left:1887.99px;top:598px;font-size:23.3px;color:#3c94ff;transform:scaleX(0.9554);">=</span>
<span class="t" style="left:1912.24px;top:598px;font-size:23.3px;color:#3c94ff;transform:scaleX(0.9261);">0.0000</span>
<span class="t" style="left:2043.68px;top:598px;font-size:23.3px;color:#3c94ff;transform:scaleX(0.9346);">bit</span>
<span class="t" style="left:1667.35px;top:624px;font-size:23.3px;color:#3c94ff;transform:scaleX(0.9391);">Bit Count</span>
<span class="t" style="left:1887.99px;top:624px;font-size:23.3px;color:#3c94ff;transform:scaleX(0.9554);">=</span>
<span class="t" style="left:1912.02px;top:624px;font-size:23.3px;color:#3c94ff;transform:scaleX(0.9261);">772.16</span>
<span class="t" style="left:2031.68px;top:624px;font-size:23.3px;color:#3c94ff;transform:scaleX(0.9377);">kbit</span>
<div class="r" style="left:2526px;top:169px;width:21px;height:484px;background:#f0f0f0;"></div>
<div class="r" style="left:2527px;top:190px;width:19px;height:21px;background:#cdcdcd;"></div>
<svg class="r" style="left:2530px;top:174px" width="13" height="12" viewBox="0 0 13 12"><path d="M2 9 L6.5 3.4 L11 9" fill="none" stroke="#606060" stroke-width="2"/></svg>
<svg class="r" style="left:2530px;top:637px" width="13" height="12" viewBox="0 0 13 12"><path d="M2 3 L6.5 8.6 L11 3" fill="none" stroke="#606060" stroke-width="2"/></svg>
</div>
<div id="plotA">
<span class="t" style="left:118.36px;top:176px;font-size:23.3px;color:#fff;transform:scaleX(0.9317);">Rng 630.9573 mV</span>
<span class="t" style="left:81.47px;top:202px;font-size:23.3px;color:#fff;transform:scaleX(0.9262);">2.5</span>
<span class="t" style="left:81.65px;top:318px;font-size:23.3px;color:#fff;transform:scaleX(0.9272);">I-Q</span>
<span class="t" style="left:75.43px;top:410px;font-size:23.3px;color:#fff;transform:scaleX(0.9260);">500</span>
<span class="t" style="left:93.96px;top:437px;font-size:23.3px;color:#fff;transform:scaleX(0.9274);">m</span>
<span class="t" style="left:76.73px;top:462px;font-size:23.3px;color:#fff;transform:scaleX(0.9377);">/div</span>
<span class="t" style="left:74.53px;top:552px;font-size:23.3px;color:#fff;transform:scaleX(0.9215);">-2.5</span>
<span class="t" style="left:118.13px;top:605px;font-size:23.3px;color:#fff;transform:scaleX(0.9246);">-4.84452736</span>
<span class="t" style="left:759.45px;top:605px;font-size:23.3px;color:#fff;transform:scaleX(0.9261);">4.844527363</span>
<svg class="r" style="left:118px;top:200px" width="780" height="403" viewBox="0 0 780 403"><rect x="1.5" y="1.5" width="777" height="400" fill="none" stroke="#444" stroke-width="3"/><circle cx="390.1" cy="201.1" r="116" fill="#ffff00"/><path d="M514.8,201.1 506.7,202.8 508.1,204.6 517.9,206.8 504.7,208.0 511.9,210.2 516.1,212.4 510.8,213.8 512.0,215.8 508.8,217.2 510.2,219.2 510.3,221.1 511.4,223.1 512.3,225.2 510.1,226.6 508.8,228.2 511.1,230.6 502.6,230.4 515.5,235.7 509.0,235.8 501.5,235.5 510.3,240.2 504.9,240.3 505.4,242.4 500.6,242.6 498.4,243.6 498.3,245.4 496.8,246.7 498.3,249.3 497.7,251.0 499.9,254.0 501.3,256.7 496.9,256.5 501.4,261.0 493.9,259.0 490.5,259.1 492.7,262.4 493.4,264.9 487.7,263.4 498.3,272.5 491.3,270.1 490.8,272.0 494.2,276.7 487.5,274.1 488.7,277.3 488.1,279.3 480.7,275.6 479.2,276.6 488.2,286.8 481.8,283.6 480.7,285.2 478.9,286.0 471.4,281.2 474.2,286.5 476.7,291.6 468.2,285.2 466.4,285.9 471.9,294.7 463.8,288.1 464.1,291.1 468.3,299.2 466.5,299.9 458.6,292.5 464.4,303.4 461.9,303.0 455.2,296.6 458.4,304.6 453.4,300.1 452.4,302.0 452.9,306.1 447.4,300.4 446.1,301.5 445.5,304.0 445.8,308.4 444.5,309.9 444.9,315.0 441.4,311.8 438.0,308.7 437.9,313.0 437.2,316.0 434.0,313.0 431.0,310.1 431.1,315.6 428.3,313.0 428.6,319.6 426.3,318.4 424.5,319.0 422.6,318.8 419.3,313.5 419.0,319.4 419.5,330.1 414.3,315.1 412.3,314.0 413.0,327.1 409.0,315.1 407.4,315.9 406.4,321.7 404.5,321.2 402.3,317.1 401.0,322.5 399.1,320.6 397.4,322.9 395.6,324.0 393.6,317.5 391.9,318.3 390.1,330.4 388.3,321.8 386.4,325.0 384.7,321.0 382.8,322.2 381.4,317.6 379.5,319.1 377.3,322.9 375.4,323.3 372.2,333.3 371.8,322.5 370.9,316.9 367.6,325.2 368.0,313.6 365.0,319.2 364.4,313.8 361.7,317.3 361.0,313.0 354.2,331.0 356.7,315.4 355.9,312.1 352.6,316.6 351.4,314.4 350.3,312.2 345.0,321.2 345.3,315.2 346.4,307.7 343.2,310.9 341.6,310.1 341.0,307.1 336.3,312.8 337.5,306.2 335.2,306.9 328.0,316.5 332.6,304.2 330.6,304.1 320.6,317.3 326.6,303.9 328.1,298.1 320.3,306.8 324.2,297.8 324.2,294.7 310.3,310.9 320.9,293.5 317.2,295.3 312.5,298.4 317.2,289.7 311.0,294.4 306.1,297.3 313.2,286.5 309.6,287.8 302.6,292.6 309.7,282.7 306.6,283.3 300.4,286.8 305.7,279.4 304.8,277.9 298.1,281.5 296.1,280.7 300.6,274.7 292.3,279.1 296.2,273.7 295.9,271.7 294.4,270.6 288.1,272.9 294.8,266.0 285.2,270.4 285.8,267.8 284.7,266.3 277.9,268.1 285.6,261.4 287.8,258.2 277.6,261.6 281.7,257.3 286.9,252.7 275.1,256.5 285.6,249.5 277.8,251.1 279.1,248.5 282.0,245.4 279.2,244.6 271.5,245.6 273.9,242.7 278.9,239.1 271.4,239.7 277.6,235.8 278.7,233.6 266.3,235.3 270.6,232.2 273.2,229.6 269.9,228.5 272.1,226.2 268.5,225.0 263.8,224.0 268.4,221.3 268.5,219.4 269.9,217.4 272.8,215.2 272.9,213.4 271.1,211.8 273.9,209.8 266.3,208.5 264.1,206.8 266.4,204.8 267.8,202.9 262.4,201.1 267.3,199.3 265.3,197.4 259.2,195.2 267.4,193.7 273.6,192.4 264.8,189.8 267.5,188.2 275.5,187.3 267.3,184.5 268.4,182.8 273.9,181.8 258.8,177.3 268.8,177.2 277.1,177.1 260.2,171.4 272.1,172.3 272.8,170.6 269.6,167.9 274.9,167.4 276.4,166.0 269.2,161.8 274.1,161.5 273.8,159.4 277.3,158.8 281.4,158.4 283.6,157.4 281.7,154.8 278.0,151.2 284.4,152.1 286.0,150.9 280.8,146.5 287.0,147.6 281.0,142.4 282.8,141.3 282.3,138.9 282.8,137.0 284.8,136.0 289.7,136.9 279.4,128.0 293.1,135.0 289.0,129.9 291.7,129.6 293.7,128.8 292.7,125.8 292.0,122.8 298.5,125.8 295.7,121.1 296.9,119.6 302.4,122.2 303.6,120.8 294.0,109.3 307.9,120.1 303.0,112.7 306.2,113.3 309.3,114.0 308.5,110.5 311.3,110.9 312.7,109.7 312.0,106.1 310.9,101.8 318.9,109.0 316.8,103.3 316.4,99.6 318.9,99.9 319.7,97.9 322.2,98.2 324.5,98.4 324.8,95.4 328.6,98.2 331.3,99.2 330.7,94.5 332.0,93.1 335.1,95.0 335.8,92.6 335.0,86.6 337.6,87.7 341.2,91.3 341.0,86.2 343.1,86.4 346.2,89.3 343.4,76.8 350.3,90.0 350.0,83.6 354.1,90.2 354.9,86.9 355.4,82.2 354.1,70.6 360.0,85.3 360.6,80.4 363.0,82.3 365.0,82.8 366.4,80.6 367.6,77.2 371.0,85.8 372.7,85.4 373.4,77.4 375.9,82.8 378.1,86.7 379.5,83.4 381.0,79.6 382.8,79.1 384.7,81.5 386.5,81.5 388.4,85.2 390.1,69.6 391.8,84.9 393.7,80.7 396.0,70.3 397.4,79.5 399.2,79.6 401.5,74.6 403.1,77.6 403.8,87.3 407.5,72.6 407.2,87.4 408.9,87.9 413.5,72.3 412.4,87.7 414.9,84.6 419.7,71.4 418.0,86.8 420.9,82.6 421.8,86.3 422.6,90.0 425.0,87.9 428.6,82.8 427.5,91.5 429.4,91.5 431.3,91.3 433.0,91.7 435.4,90.5 438.0,89.1 438.4,92.5 442.5,87.9 446.8,83.4 443.4,94.5 443.6,98.0 448.0,93.4 446.5,99.9 447.5,101.7 458.5,86.7 452.4,100.3 453.6,101.7 457.8,98.5 458.6,100.6 458.2,104.4 464.2,99.1 462.3,104.8 459.9,110.9 472.5,97.8 465.0,110.0 468.3,108.9 474.9,104.0 469.6,112.8 469.9,115.1 478.6,108.5 475.8,114.1 478.7,113.8 476.8,118.2 480.5,117.2 481.3,119.0 487.0,116.5 479.9,125.0 486.2,122.1 487.7,123.2 481.9,130.1 482.3,132.0 498.1,122.6 483.6,135.3 487.2,134.9 494.6,132.1 489.5,137.6 495.5,136.0 496.7,137.4 497.7,139.0 495.8,142.2 498.6,142.7 495.1,146.6 498.1,147.1 503.4,146.5 497.2,151.5 498.1,153.0 508.7,150.4 501.1,155.6 499.0,158.3 509.5,156.3 499.1,162.0 505.2,161.8 501.0,165.1 499.7,167.3 508.0,166.6 504.2,169.6 501.0,172.3 503.7,173.4 517.5,172.0 511.4,175.3 512.2,177.1 519.1,177.7 503.5,182.3 512.9,182.6 510.1,184.8 511.5,186.5 512.9,188.2 509.0,190.4 513.4,191.9 512.2,193.8 522.3,195.2 504.5,197.7 504.7,199.4Z" fill="#ffff00"/><path d="M367.8,245.4 390.2,312.8 458.3,227.0 504.7,231.2 431.6,220.5 493.5,286.4 319.4,128.5 331.6,99.7 432.6,194.7 505.1,201.7 356.7,287.5 324.1,304.9 348.8,152.2 348.3,97.5 361.4,140.0 352.0,84.1 333.2,218.3 266.5,235.1 294.4,185.9 310.9,118.1 437.4,195.2 518.1,228.3 471.0,221.3 482.7,281.8 432.9,158.7 427.3,83.5 444.4,115.9 427.5,80.6 469.6,232.8 511.8,277.0 327.2,255.7 334.4,306.2 413.5,242.3 423.3,327.6 315.3,262.0 281.0,248.4 297.3,171.5 257.1,171.7 328.6,276.3 285.2,242.5 414.7,250.1 475.8,284.8 457.3,202.8 510.9,179.0 471.3,176.6 506.5,156.3 463.3,147.8 484.5,108.1 338.7,242.2 280.2,261.3 403.1,249.7 411.0,310.7 439.9,201.2 452.5,299.2 352.7,168.6 315.9,112.0 358.6,237.1 367.9,342.2 430.1,224.9 480.5,271.1 414.1,156.9 420.7,64.1 349.9,190.0 250.9,169.9 445.8,136.9 496.2,152.6 301.4,182.8 323.9,108.9 429.3,105.2 478.8,102.1 400.8,273.6 477.3,271.1 447.4,211.2 488.0,283.1 486.3,161.1 490.0,141.1 400.2,254.6 482.4,266.9 428.4,141.4 365.4,71.1 461.5,243.0 503.8,267.9 429.7,282.9 503.4,270.4 454.8,189.5 527.4,169.7 424.9,236.6 507.3,264.3 447.0,275.2 498.1,266.5 417.9,231.0 419.9,323.0 290.8,184.4 260.6,157.6 389.4,259.8 425.9,318.8 386.1,267.9 428.1,333.9 304.6,151.9 310.7,87.4 315.5,200.3 282.6,232.5 482.0,203.4 508.6,217.9 378.3,126.2 289.5,133.8 450.2,248.1 497.2,242.2 400.3,129.2 464.2,93.6 334.7,154.0 273.5,148.7 318.8,223.0 275.7,282.4 443.3,181.0 423.0,65.1 416.3,160.0 483.0,127.5 465.0,237.9 502.2,281.2 439.0,272.2 349.3,305.7 409.5,300.7 495.5,258.5 484.0,195.1 493.1,142.9 410.4,258.0 432.2,304.4 325.4,178.4 274.6,211.1 485.8,241.8 532.4,198.7 435.4,236.0 497.1,277.9 302.5,247.4 278.6,226.8 449.0,281.2 450.1,313.9 364.5,138.8 349.1,67.5 328.9,132.6 415.0,68.2 330.7,218.8 251.3,185.2 384.7,249.0 351.9,308.1 440.6,217.6 491.1,256.6 393.6,142.7 390.7,88.5 390.0,241.9 380.2,322.4 416.4,266.6 407.7,311.6 295.9,204.0 284.9,260.2 350.5,105.6 316.1,89.2 338.4,236.2 358.2,308.6 469.7,238.8 423.4,308.6 447.5,140.7 498.2,164.5 371.4,268.1 370.6,317.8 464.5,188.2 454.3,327.0 367.0,259.6 414.5,315.1 412.2,270.1 414.5,312.5 445.9,236.2 491.3,248.8 326.2,163.2 309.6,104.1 369.5,106.6 398.1,86.2 376.9,120.8 364.7,69.4 453.0,150.6 518.1,163.3 295.9,198.5 271.9,137.6 305.4,151.9 280.6,135.2 432.6,248.0 467.3,311.0 314.7,172.2 269.4,160.4 416.3,116.8 426.4,85.4 366.2,164.0 365.2,90.1 383.2,148.5 396.8,59.4 325.3,203.6 262.6,196.6 362.0,166.1 278.2,177.6 387.6,141.7 425.8,95.5 350.1,126.5 351.4,93.3 320.3,193.9 285.0,161.1 490.0,187.4 502.4,161.1 433.9,108.4 467.4,116.9 409.1,276.2 293.4,274.1 436.6,186.9 505.8,235.9 401.6,298.3 455.7,291.5 462.0,202.7 499.8,236.5 351.9,287.2 299.2,294.3 415.5,160.8 490.8,121.1 344.6,248.0 327.8,307.4 346.6,252.9 278.7,213.8 367.7,298.9 308.7,281.4 337.9,197.5 286.8,105.0 322.5,128.6 270.7,175.2 381.9,158.9 368.9,84.5 380.4,243.0 443.3,299.9 328.7,211.9 262.9,174.2 356.9,151.9 319.2,107.9 415.2,244.7 496.1,289.8 477.2,143.2 484.3,139.4 406.3,243.8 427.1,306.6 301.6,159.9 309.9,115.0 326.6,239.1 275.7,220.4 437.3,191.4 515.2,194.9 425.3,160.3 420.6,91.5 481.3,174.1 502.1,204.5 474.5,218.3 507.6,224.1 312.3,263.9 285.1,286.7 445.4,191.4 458.2,111.4 471.2,170.0 506.9,141.5 317.0,221.1 259.4,220.1 353.6,154.0 440.9,99.2 334.1,136.9 280.2,178.6 348.5,236.2 312.4,281.4 367.9,267.1 304.6,293.0 395.5,256.6 448.8,314.8 375.5,239.7 387.2,327.6 340.4,114.6 353.4,95.8 354.7,258.1 309.3,280.4 336.8,199.5 305.9,279.7 413.5,151.6 402.7,71.3 337.9,202.5 342.6,93.6 338.5,113.9 364.4,87.1 417.3,234.7 320.3,295.1 468.3,143.2 530.0,168.0 429.8,293.3 452.6,293.7 357.0,145.9 332.6,101.0 378.4,262.5 365.5,310.4 442.2,189.3 524.1,202.2 457.5,222.5 527.4,177.8 412.4,260.4 491.5,248.5 394.6,158.9 452.6,108.4 439.8,173.9 494.5,111.1 467.4,180.2 518.8,210.3 366.6,253.8 277.9,268.0 429.1,186.7 480.8,123.2 488.4,173.9 469.8,119.6 436.8,178.6 517.4,175.0 429.9,120.5 419.5,89.6 399.2,157.1 467.3,96.2 390.8,245.1 465.0,297.4 467.6,131.8 487.9,255.9 449.6,242.1 484.2,273.4 329.1,143.9 350.3,72.4 365.6,160.2 294.6,137.2 386.1,148.6 359.4,91.6 445.7,280.7 501.5,169.5 335.1,198.6 321.4,95.7 436.7,198.5 504.9,269.6 447.3,215.9 478.2,130.2 466.9,188.0 504.8,223.5 384.4,291.0 428.1,306.4 324.0,155.7 310.2,116.4 387.7,279.6 357.3,309.3 451.2,205.5 503.2,194.7 411.3,128.9 453.2,108.6 330.2,247.2 281.5,229.8 340.8,232.3 249.5,188.0 360.8,271.7 272.3,209.3 355.5,240.8 450.0,297.1 488.6,204.7 481.1,103.3 341.1,213.3 274.4,161.7 327.2,124.8 279.0,144.1 425.6,247.2 421.2,336.5 445.8,246.3 492.2,299.3 487.0,165.1 501.5,188.7 448.4,172.1 508.3,160.8 402.3,148.3 384.9,66.6 414.9,155.7 391.1,84.1 430.2,240.1 494.1,291.5 464.1,220.6 493.8,243.5 328.7,157.0 284.4,155.1 321.8,238.4 322.8,307.6 469.5,212.8 498.2,237.1 397.8,111.2 373.3,89.7 437.1,250.0 468.8,289.7 347.5,198.4 277.9,204.0 346.7,198.0 307.7,283.8 436.6,186.3 521.8,143.8 426.1,298.0 525.0,243.3 433.9,175.7 529.3,187.0 392.1,151.1 415.7,89.8 409.9,156.1 458.5,80.4 329.4,198.8 286.5,155.7 443.5,286.3 407.9,337.2 446.0,250.1 399.8,316.7 443.2,146.9 513.8,260.2 345.1,153.6 413.6,89.5 467.5,196.5 513.3,156.2 388.4,158.2 398.1,87.6 323.4,121.7 307.8,105.3 438.7,211.5 505.2,229.1 292.2,193.3 276.2,199.0 453.2,202.1 506.3,192.9 402.6,277.6 451.0,296.5 456.9,276.3 491.8,249.7 457.3,247.0 516.9,237.7 471.8,207.0 501.3,235.2 348.1,146.8 312.0,98.0 461.8,221.3 414.2,312.0 474.7,233.4 489.3,272.3 414.9,276.3 441.1,315.5 410.0,154.0 503.7,181.5 407.9,116.9 457.5,84.5 388.0,131.2 390.7,82.6 394.8,243.1 374.2,330.0 358.0,112.2 304.0,125.8 407.8,129.6 398.2,76.2 442.9,189.4 498.8,174.3 386.2,100.3 427.4,92.0 434.9,159.4 430.3,69.1 337.5,112.3 270.1,139.6 359.2,111.0 305.1,104.1 409.1,278.9 447.0,327.1 415.8,233.9 492.1,296.3 432.1,208.7 505.2,250.8 361.4,118.5 290.5,128.1 431.6,112.8 513.8,143.8 477.2,149.4 493.0,153.3 443.6,125.6 476.5,98.9 350.3,158.2 315.3,117.7 361.7,262.1 379.1,314.4 372.5,285.4 308.6,282.8 437.8,137.0 447.1,98.3 307.0,236.0 295.1,287.2 419.9,166.3 456.1,109.7 443.2,201.5 508.7,279.9 298.4,206.0 269.8,205.6 336.2,277.8 318.1,321.3 367.5,132.7 392.9,76.2 469.8,245.3 520.2,225.0 336.7,239.1 325.5,292.5 421.9,174.4 501.8,176.1 319.3,267.8 336.1,307.0 302.8,183.7 264.4,208.6 443.2,279.2 420.1,327.1 423.3,260.8 404.2,323.0 431.7,164.6 499.3,164.4 362.6,110.8 358.1,93.3 340.1,194.1 295.5,138.9 476.4,187.6 527.8,234.5 481.3,191.9 506.5,223.6 417.1,277.6 438.3,303.4 316.5,255.0 287.3,263.8 342.9,149.5 267.3,182.3 447.0,164.2 519.7,186.2 341.8,227.0 262.7,251.5 440.6,134.1 375.4,83.5 358.9,275.3 327.8,301.0 351.5,160.4 271.0,196.3 342.0,155.3 321.9,79.6 401.6,137.2 496.4,106.7 463.3,218.9 481.8,295.6 452.4,246.8 508.2,252.8 308.8,194.9 319.7,299.4 411.1,282.5 339.2,321.4 464.8,273.1 476.4,272.3 457.1,206.7 497.1,271.3 355.8,246.7 268.3,246.7 408.0,291.0 436.5,304.3 452.3,266.5 513.5,223.7 405.5,302.1 393.5,326.1 429.1,117.0 411.3,88.5 421.8,146.8 439.8,98.4 349.9,240.6 276.8,198.7 379.2,255.7 365.1,317.8 316.8,236.3 284.3,152.1 477.9,233.9 522.0,192.4 449.9,273.3 332.6,296.7 358.8,154.6 335.8,102.7 399.4,290.6 323.9,292.1 438.4,285.9 502.4,270.1 342.0,116.0 355.0,71.5 303.5,184.2 307.0,92.4 336.3,181.8 279.0,181.8 341.8,211.2 272.0,224.8 297.0,177.6 264.8,251.1 342.1,120.0 343.7,93.0 433.6,190.2 504.4,252.9 348.8,109.9 347.7,65.3 318.8,196.4 278.3,209.2 339.4,282.2 405.6,319.3 301.2,186.8 280.9,247.1 417.5,149.1 472.9,117.8 332.5,199.7 263.5,266.1 360.6,253.8 417.5,321.0 329.9,133.3 358.0,76.5 446.7,219.3 502.9,189.7 460.2,163.6 522.0,212.5 330.1,147.3 274.2,157.2 367.5,152.5 342.0,92.5 407.8,239.4 475.5,310.2 354.4,148.3 282.5,124.5 368.4,264.6 368.9,317.1 326.8,123.2 338.2,90.3 418.7,129.6 440.8,94.1 455.0,206.8 501.6,285.9 350.4,225.4 297.5,266.7 413.8,234.4 349.7,321.5 472.2,251.6 403.0,311.8 379.4,146.7 456.6,109.8 368.4,108.5 394.4,89.5 330.6,139.2 290.1,103.6 381.8,161.4 501.6,142.4 408.7,160.1 493.5,123.3 346.4,204.8 301.9,115.6 312.3,232.5 302.9,300.8 344.0,152.5 362.4,72.4 475.7,170.4 461.0,291.3 363.0,111.8 415.8,80.1 483.2,187.9 444.0,99.6 329.7,259.9 259.2,244.4 410.7,146.7 364.4,90.0 429.4,112.1 479.4,100.9 426.6,112.3 481.8,132.5 350.4,110.4 288.0,154.5 303.4,170.9 287.7,120.5 324.3,149.1 291.5,145.0 387.5,289.4 304.4,283.6 397.8,146.8 469.6,88.8 445.6,152.5 492.2,131.6 426.2,278.3 406.3,322.2 329.9,243.2 278.9,215.4 453.9,251.0 479.5,269.8 339.0,165.5 446.8,105.0 437.8,148.0 489.3,144.3 402.4,134.9 477.0,103.1 389.0,243.3 493.1,247.9 427.6,222.7 499.2,119.3 427.4,177.5 503.9,172.0 464.8,270.8 512.8,196.2 358.4,144.0 277.7,190.0 492.2,178.9 499.2,175.4 471.0,144.7 501.0,184.9 409.6,117.6 457.6,75.5 393.2,100.6 404.7,87.4 315.2,152.8 292.2,139.6 339.5,207.0 278.4,185.5 372.2,164.6 459.8,112.1 408.6,299.6 380.2,337.6 434.2,254.0 432.4,333.7 330.8,219.3 314.5,293.6 356.0,165.7 301.6,132.5 449.4,276.9 503.1,234.7 422.3,248.7 425.0,311.2 349.2,290.5 275.4,285.7 482.1,235.3 503.6,195.5 387.5,253.9 374.8,343.0 490.2,199.9 504.2,215.3 381.4,143.0 362.1,93.2 411.9,143.2 458.8,113.1 416.9,263.6 481.6,268.3 346.0,180.0 267.5,153.9 430.2,222.8 508.7,222.2 382.1,253.6 340.1,319.0 403.2,243.2 483.3,272.9 382.4,158.4 431.8,93.4 349.1,202.9 313.9,293.1 429.9,160.0 462.3,88.1 335.8,257.8 289.2,268.0 320.8,225.5 261.5,192.7 352.9,278.5 449.2,317.0 479.8,237.2 507.4,174.0 349.9,191.5 278.1,180.5 409.3,243.4 417.2,331.5 373.5,151.4 356.0,82.4 324.5,167.1 331.5,105.6 436.2,214.5 505.4,166.0 381.2,248.0 458.0,290.6 436.6,262.5 494.9,243.1 436.5,111.9 475.2,119.5 309.9,262.5 345.0,307.5 393.8,262.5 346.6,336.5 427.9,114.3 318.5,103.8 487.3,174.9 488.7,136.2 346.4,192.6 270.9,220.1 438.7,207.5 483.4,293.7 425.6,110.8 401.2,90.2 354.0,156.8 277.8,224.5 349.4,162.4 284.1,148.3 446.0,183.4 514.1,223.5 460.7,181.2 507.6,223.0 341.6,190.7 277.7,192.8 376.8,255.0 308.4,291.5 432.7,134.1 480.7,113.8 316.8,219.4 285.4,143.6 369.4,252.6 403.7,320.7 452.8,205.8 489.2,257.4 322.7,176.2 247.8,185.0 414.2,238.1 360.7,315.5 450.4,225.7 492.2,280.9 475.2,179.0 506.1,197.7 339.7,267.9 283.5,284.4 383.9,113.4 321.0,103.8 408.8,117.5 418.1,92.6 397.8,123.8 399.3,60.3 329.7,171.9 253.7,191.5 323.4,221.6 295.4,266.2 331.3,249.1 286.5,252.4 321.2,201.3 323.0,294.4 437.5,262.0 420.3,308.7 442.4,122.8 431.6,95.9 301.3,245.1 329.6,295.0 469.3,158.0 497.0,105.3 316.9,193.1 278.4,236.9 329.8,282.5 278.8,249.4 442.4,238.4 507.4,165.3 460.0,185.3 487.0,122.4 452.4,199.6 521.6,225.5 482.9,188.5 499.1,228.7 457.0,149.2 528.5,163.9 422.7,249.8 486.6,273.3 409.8,248.8 511.3,228.1 362.1,168.9 460.0,89.3 360.5,280.3 314.0,287.4 364.1,155.4 282.7,142.7 381.9,282.3 440.6,335.1 426.4,235.6 487.1,257.8 431.4,231.0 524.0,193.3 427.8,216.5 503.5,178.2 376.5,139.9 460.4,111.1 335.6,170.3 342.2,94.6 482.3,233.9 525.3,159.1 390.3,243.7 356.1,331.9 351.1,291.0 455.9,295.3 288.4,203.9 307.5,284.0 379.4,148.0 269.3,137.0 392.2,252.1 385.0,313.7 448.1,190.7 478.9,132.3 353.8,226.3 288.5,288.4 356.9,245.9 320.8,292.3 358.2,148.0 339.4,83.6 438.2,232.6 497.4,167.0 407.1,154.0 471.1,100.8 316.9,272.2 330.2,328.2 343.7,215.2 281.0,235.6 453.2,155.2 461.2,112.1 423.5,166.8 454.1,97.7 378.6,290.1 423.2,322.5 355.0,230.0 302.6,304.1 354.2,275.7 381.9,322.9 377.2,243.3 312.8,284.4 450.9,262.5 396.2,318.1 461.2,136.9 431.2,94.5 472.8,216.6 495.4,151.8 372.5,148.0 397.6,85.5 354.4,163.8 286.6,108.9 431.3,211.8 487.9,143.9 368.9,262.0 375.1,315.0 431.2,136.2 426.3,93.1 312.6,234.5 278.1,197.9 380.4,242.6 451.8,308.6 443.5,217.4 501.5,272.5 390.0,155.7 493.2,145.1 388.7,107.7 442.0,102.0 467.0,165.2 500.1,124.2 342.0,151.3 266.4,167.6 433.6,180.1 500.1,179.9 363.1,113.2 437.9,89.3 336.0,185.9 274.7,184.9 345.0,228.9 307.9,277.9 394.3,256.4 474.9,284.0 447.9,176.6 527.5,201.3 343.5,281.2 278.1,268.7 430.6,273.6 437.9,309.9 434.3,239.7 501.0,176.5 444.2,222.6 517.0,219.8 358.3,263.7 331.3,297.2 426.7,218.8 444.9,319.0 466.1,191.6 505.8,233.7 342.2,222.0 280.7,177.2 320.1,129.0 287.4,151.2 391.3,249.9 364.1,329.6 422.1,275.6 486.2,302.0 434.7,280.0 469.9,303.4 417.8,147.2 474.0,112.6 326.0,269.6 378.1,312.0 426.5,123.7 411.3,62.7 317.7,203.6 277.5,225.4 370.9,154.5 323.3,76.2 426.1,223.7 486.3,260.7 441.7,121.1 450.3,99.8 372.9,281.9 399.0,318.4 343.0,120.5 382.1,88.9 370.6,266.8 349.3,309.5 358.9,263.4 304.9,310.0 458.6,124.2 478.9,113.7 354.6,130.2 318.1,101.8 458.2,180.4 464.2,113.3 441.6,210.2 450.2,303.2 461.4,243.2 513.5,201.6 329.7,175.2 304.6,127.2 448.4,153.1 494.6,114.2 334.8,190.3 278.2,151.8 401.4,277.1 428.3,315.4 352.6,225.4 284.7,286.9 308.0,174.2 340.7,100.5 465.4,257.0 483.8,264.1 464.3,182.2 500.0,176.3 395.4,264.8 421.0,320.5 403.8,258.7 355.0,313.5 443.3,146.2 432.9,72.0 433.7,277.7 493.7,281.2 436.2,245.7 530.6,190.5 382.5,159.2 293.4,144.1 466.1,266.0 493.7,249.3 414.2,265.5 424.1,319.1 460.9,259.7 478.7,285.1 369.0,282.7 318.1,287.5 355.8,115.6 308.3,124.9 362.8,242.5 310.4,311.6 428.6,285.6 451.8,300.5 340.4,208.7 278.9,163.5 444.7,229.1 527.9,199.0 353.8,178.4 273.9,210.6 342.1,241.7 286.4,267.6 369.3,236.7 287.8,300.8 362.6,150.6 341.2,91.4 384.3,277.5 361.0,338.8 306.5,167.8 267.5,153.2 335.6,141.1 340.2,98.1 468.2,169.6 417.5,73.5 385.3,128.5 329.2,102.4 447.6,223.9 529.9,232.2 326.7,208.5 280.3,231.8 486.6,205.5 504.8,232.0 335.9,176.3 282.8,168.6 379.0,126.5 420.0,89.4 458.7,164.3 365.5,91.1 333.8,271.4 396.2,336.8 455.2,230.5 494.9,247.7 419.5,250.2 437.4,304.1 347.3,232.2 298.0,301.0 379.7,99.5 349.9,96.8 425.5,111.3 454.6,109.1 448.0,143.9 501.3,177.7 349.0,279.3 356.8,313.5 452.7,224.6 515.1,195.1 353.6,263.0 340.3,303.6 458.5,166.6 491.0,152.5 324.4,144.2 317.7,115.6 395.0,155.8 429.4,90.1 314.1,182.4 264.5,215.8 386.9,144.7 348.5,77.4 399.9,142.1 358.5,62.7 290.0,186.4 282.0,172.1 308.5,213.6 275.9,177.3 392.0,155.5 392.1,89.0 457.6,227.8 467.3,283.6 420.6,242.5 491.0,296.8 412.1,236.6 386.5,314.6 349.2,154.3 306.1,116.7 345.9,289.0 273.1,256.9 311.6,256.4 273.9,240.6 305.9,254.3 280.5,261.3 384.8,268.8 340.4,302.7 394.8,119.9 417.6,60.8 443.3,280.8 384.5,315.0 391.0,108.1 290.2,142.6 434.6,272.4 443.0,307.3 304.5,154.8 253.0,209.0 424.0,162.0 531.2,174.1 377.8,240.6 249.8,225.4 441.4,272.1 450.0,296.5 371.3,159.5 307.0,89.9 431.9,195.8 445.6,81.3 374.3,161.9 326.3,107.1 493.7,214.1 523.7,231.5 442.2,250.1 445.4,305.3 442.7,271.3 385.1,312.9 346.3,258.3 296.5,269.8 455.1,142.7 487.0,259.3 386.0,245.2 441.8,309.8 363.7,231.9 280.2,263.0 317.3,180.6 294.2,95.6 341.2,236.8 338.3,333.1 340.7,243.3 300.9,269.8 312.0,138.6 293.0,123.5 350.3,239.8 282.3,233.1 426.4,177.7 420.5,90.0 344.2,141.2 415.0,61.7 434.4,143.2 477.6,87.7 398.0,281.2 415.1,314.9 311.4,188.1 280.3,237.4 338.2,146.8 295.4,120.5 304.4,215.6 317.6,106.1 399.0,249.3 476.1,286.5 411.6,150.2 430.5,73.9 311.0,221.2 253.8,221.5 321.0,264.6 316.3,285.7 422.1,247.2 436.0,307.7 346.4,214.4 297.4,310.5 366.7,136.3 347.1,76.0 363.0,143.6 314.6,116.0 347.4,245.9 298.6,265.3 438.3,219.3 453.8,296.1 365.1,250.7 410.7,311.0 410.3,265.2 498.4,262.8 360.4,231.9 317.9,292.4 321.3,245.8 325.8,297.6 331.8,252.0 276.9,194.8 332.2,260.6 324.2,291.5 392.6,136.8 469.8,111.2 467.6,213.6 503.1,162.8 425.8,144.7 393.2,64.2 296.8,194.2 265.4,164.3 355.3,225.7 283.5,261.0 430.2,237.6 523.1,186.7 426.8,228.2 417.0,320.3 372.8,132.2 391.6,73.9 322.3,239.4 263.2,243.1 352.9,264.4 344.0,336.1 381.3,257.2 329.6,297.7 322.9,196.5 285.0,248.4 451.8,133.0 470.8,120.3 327.5,186.4 278.8,155.9 335.0,169.2 337.0,101.3 447.4,220.1 507.9,202.5 334.1,177.0 260.1,174.2 415.5,127.2 514.4,136.6 298.8,233.9 283.2,252.2 419.1,167.3 452.7,107.2 457.7,165.5 471.2,112.4 375.1,252.4 432.3,305.2 436.6,174.9 498.9,173.0 318.9,243.2 412.8,337.1 370.5,155.3 453.3,90.3 375.2,253.9 332.6,300.9 343.7,182.6 290.6,142.2 421.8,102.8 397.8,89.9 330.6,256.7 273.0,235.8 380.8,134.1 409.5,90.8 412.8,159.1 515.6,131.3 374.2,261.4 386.6,320.9 431.7,181.5 469.3,90.8 431.8,226.9 525.3,227.8 421.0,156.1 339.9,101.4 333.5,284.8 408.9,311.1 355.6,260.8 287.9,281.3 376.8,243.4 290.1,252.1 303.6,172.2 316.9,107.3 457.3,247.9 481.4,283.6 351.3,252.2 283.9,239.5 343.6,283.2 270.2,202.9 417.4,238.1 497.0,236.0 442.2,248.3 478.9,284.0 326.3,198.4 273.2,187.3 396.2,297.1 364.6,335.7 491.0,210.7 499.8,127.1 401.6,288.7 440.7,303.4 454.4,213.7 498.0,241.1 341.5,175.1 266.4,154.8 379.4,158.6 377.5,78.3 327.5,143.9 303.3,124.2 416.1,136.4 475.0,128.4 351.9,226.2 297.2,291.2 368.5,156.4 353.1,95.1 339.7,291.0 291.2,288.8 318.4,210.2 252.5,217.7 415.5,277.3 503.6,268.7 462.5,248.4 419.2,309.8 388.7,152.6 364.0,64.0 463.2,151.5 456.4,86.3 431.5,120.5 411.3,88.4 462.4,183.1 481.9,265.9 388.9,295.1 408.3,312.6 336.6,215.5 273.8,276.2 319.3,257.9 368.6,326.2 477.6,167.7 458.7,112.6 348.1,267.3 418.4,330.0 461.9,203.1 499.7,226.3 334.9,158.7 278.2,181.2 332.5,276.2 293.9,263.9 369.3,135.9 377.1,69.1 451.4,258.9 471.5,307.1 451.4,184.5 527.1,214.6 314.6,138.8 353.7,86.7 442.3,197.4 500.0,174.9 350.7,194.3 282.7,291.6 389.8,263.7 358.5,318.7 437.7,145.5 524.3,162.2 461.7,237.9 531.6,203.7 336.5,264.1 394.9,317.4 450.5,161.4 500.3,111.1 478.4,234.0 501.4,150.1 457.8,146.2 492.6,156.1 367.8,244.4 283.8,288.2 352.0,181.2 320.4,91.4 353.4,156.1 283.5,157.9 471.5,189.9 512.3,166.0 315.1,270.8 301.2,292.5 306.7,158.7 306.2,121.0 437.0,257.4 464.1,286.1 373.6,241.1 380.2,317.3 490.4,180.1 504.9,212.9 360.6,262.6 352.9,308.8 339.0,241.1 282.6,240.6 300.3,230.0 292.4,113.0 370.4,246.7 424.1,315.2 391.1,143.5 355.4,67.0 332.4,190.4 278.0,178.0 425.7,133.4 436.6,69.2 384.7,256.4 376.1,321.9 311.2,249.1 359.3,311.8 326.9,120.3 319.6,94.9 472.2,169.0 465.8,111.8 411.6,142.5 357.0,69.2 342.3,115.3 322.0,107.5 451.3,227.9 525.1,213.2 326.5,244.9 338.1,325.3 412.7,109.8 422.4,78.9 469.1,142.7 435.2,75.5 332.4,123.3 295.1,115.1 383.1,244.7 454.7,318.1 382.3,254.1 440.3,301.1 410.5,141.4 303.2,130.4 422.4,149.5 481.2,115.6 454.4,226.0 493.9,284.3 481.0,224.1 503.7,193.8 352.6,268.0 366.6,331.0 414.2,292.1 321.9,301.5 461.7,213.9 495.7,238.7 330.5,137.9 273.8,183.4 404.4,296.0 416.5,331.0 449.7,186.4 488.1,146.8 309.2,225.0 274.7,230.7 361.6,244.8 303.3,276.0 321.9,194.2 307.1,103.6 408.9,254.9 330.5,314.1 484.7,169.4 505.5,143.5 439.4,221.5 521.4,237.3 384.6,263.6 461.7,303.5 449.9,197.9 475.8,127.6 413.5,135.9 494.4,159.2 441.5,275.2 368.3,342.2 297.7,214.9 298.4,265.9 322.8,172.9 380.1,87.8 365.0,103.3 377.7,83.7 382.9,136.8 382.4,66.9 407.6,276.8 408.6,311.0 434.1,121.8 483.1,138.8 445.2,227.3 527.3,207.8 308.9,209.0 281.4,166.4 452.4,248.5 495.5,242.9 314.9,222.1 274.2,256.5 383.2,158.4 379.4,84.6 349.9,125.0 310.3,104.0 452.4,277.8 495.0,240.7 397.6,304.5 372.7,316.6 331.3,135.7 278.0,208.2 481.2,187.4 501.8,192.1 406.0,282.8 287.0,272.6 440.0,173.5 488.6,148.0 475.0,186.7 512.7,149.1 428.3,263.4 349.9,326.5 485.4,202.4 492.8,115.4 309.8,199.9 258.9,179.6 333.6,184.6 285.4,161.4 388.8,159.8 353.5,73.3 358.7,158.1 330.2,106.4 464.8,190.0 498.4,171.4 417.1,163.3 350.8,93.3 394.0,151.9 402.2,59.6 432.3,222.5 503.8,250.6 321.0,192.4 283.0,264.4 380.1,110.3 276.3,129.1 381.4,160.2 267.0,144.8 433.3,292.2 391.2,329.0 389.1,260.3 338.2,304.1 472.0,191.3 519.0,224.8 444.4,112.1 449.7,103.6 444.6,208.3 501.3,284.7 347.3,280.0 305.2,308.9 464.2,258.1 515.0,209.4 339.8,256.4 387.3,313.5 292.1,177.1 251.9,187.1 352.1,106.0 323.0,109.8 446.8,205.9 449.4,331.0 420.7,262.0 449.6,313.7 390.6,257.5 485.8,285.5 404.5,255.8 486.3,281.8 320.5,152.2 280.6,176.8 427.5,217.7 463.4,286.4 473.2,185.1 519.2,225.6 410.5,242.7 461.8,294.1 383.8,155.6 320.7,108.4 410.9,164.8 490.0,146.6 362.4,150.4 284.0,161.3 431.7,173.0 479.3,115.9 418.8,237.3 484.4,270.2 345.7,138.5 429.6,96.6 460.3,275.5 469.6,302.5 449.0,270.4 484.5,269.4 391.1,292.4 395.5,317.5 395.2,147.0 360.5,91.8 345.5,146.5 350.1,96.9 341.4,120.7 311.9,121.3 306.6,222.5 279.0,218.7 339.2,207.6 271.4,200.0 344.8,254.8 300.1,283.8 439.2,224.6 419.7,319.6 419.7,164.6 359.5,84.2 393.4,251.8 359.1,309.9 452.3,169.1 497.9,170.1 332.1,218.7 276.5,256.8 461.1,194.1 501.6,211.6 348.0,141.2 318.0,106.1 397.3,272.8 473.2,295.5 446.6,273.6 436.0,322.2 432.5,171.5 458.7,98.2 427.0,175.0 462.1,115.6 422.0,283.4 426.8,336.0 321.4,249.5 270.4,275.0 288.7,193.7 274.9,115.9 351.0,164.0 361.2,91.8 405.3,301.9 407.8,317.0 344.0,270.3 287.1,256.2 469.6,201.2 473.1,286.1 310.3,168.6 360.8,91.3 419.1,240.3 360.9,320.4 423.2,172.7 432.7,96.9 307.9,253.8 300.7,303.1 445.5,185.8 473.8,283.6 422.7,226.0 451.5,297.9 484.6,181.3 505.5,239.1 348.3,141.2 278.8,175.6 347.5,136.0 354.7,68.3 477.4,246.1 494.4,245.1" fill="none" stroke="#ffff00" stroke-width="1" shape-rendering="crispEdges"/><circle cx="365.9" cy="113.0" r="5" fill="#c46a45"/><circle cx="413.6" cy="112.7" r="5" fill="#c46a45"/><circle cx="324.9" cy="136.4" r="5" fill="#c46a45"/><circle cx="455.1" cy="136.4" r="5" fill="#c46a45"/><circle cx="301.5" cy="177.7" r="5" fill="#c46a45"/><circle cx="478.5" cy="177.7" r="5" fill="#c46a45"/><circle cx="372.5" cy="183.7" r="5" fill="#c46a45"/><circle cx="407.5" cy="184.2" r="5" fill="#c46a45"/><circle cx="372.5" cy="219.3" r="5" fill="#c46a45"/><circle cx="407.5" cy="219.5" r="5" fill="#c46a45"/><circle cx="301.5" cy="225.0" r="5" fill="#c46a45"/><circle cx="478.5" cy="225.2" r="5" fill="#c46a45"/><circle cx="325.3" cy="266.1" r="5" fill="#c46a45"/><circle cx="455.1" cy="266.1" r="5" fill="#c46a45"/><circle cx="365.9" cy="290.0" r="5" fill="#c46a45"/><circle cx="413.8" cy="290.0" r="5" fill="#c46a45"/><circle cx="333.5" cy="144.5" r="4.8" fill="#00ffff"/><circle cx="446.8" cy="144.5" r="4.8" fill="#00ffff"/><circle cx="333.5" cy="258.5" r="4.8" fill="#00ffff"/><circle cx="446.8" cy="258.5" r="4.8" fill="#00ffff"/></svg>
<span class="t" style="left:135.57px;top:203px;font-size:34.3px;color:#404040;transform:scaleX(0.9577);">Beta Code</span>
<span class="t" style="left:135.57px;top:241px;font-size:34.3px;color:#404040;transform:scaleX(0.9573);">Not For Sale</span>
</div>
<div id="plotB">
<span class="t" style="left:118.36px;top:730px;font-size:23.3px;color:#fff;transform:scaleX(0.9351);">Rng 6 dBm</span>
<span class="t" style="left:467.33px;top:730px;font-size:23.3px;color:#33ff00;transform:scaleX(0.9517);">RMS:20</span>
<span class="t" style="left:80.36px;top:756px;font-size:23.3px;color:#fff;transform:scaleX(0.9205);">-20</span>
<span class="t" style="left:66.94px;top:782px;font-size:23.3px;color:#fff;transform:scaleX(0.9392);">dBm</span>
<span class="t" style="left:33.98px;top:872px;font-size:23.3px;color:#fff;transform:scaleX(0.9263);">LogMag</span>
<span class="t" style="left:87.41px;top:964px;font-size:23.3px;color:#fff;transform:scaleX(0.9260);">10</span>
<span class="t" style="left:84.77px;top:991px;font-size:23.3px;color:#fff;transform:scaleX(0.9473);">dB</span>
<span class="t" style="left:76.73px;top:1017px;font-size:23.3px;color:#fff;transform:scaleX(0.9377);">/div</span>
<span class="t" style="left:68.39px;top:1106px;font-size:23.3px;color:#fff;transform:scaleX(0.9220);">-120</span>
<span class="t" style="left:66.94px;top:1133px;font-size:23.3px;color:#fff;transform:scaleX(0.9392);">dBm</span>
<span class="t" style="left:118.01px;top:1159px;font-size:23.3px;color:#fff;transform:scaleX(0.9331);">Center 10 GHz</span>
<span class="t" style="left:118.35px;top:1185px;font-size:23.3px;color:#fff;transform:scaleX(0.9383);">Res BW 91.5588 kHz</span>
<span class="t" style="left:752.69px;top:1159px;font-size:23.3px;color:#fff;transform:scaleX(0.9343);">Span 600 MHz</span>
<span class="t" style="left:660.14px;top:1185px;font-size:23.3px;color:#fff;transform:scaleX(0.9327);">TimeLen 41.71484 uSec</span>
<svg class="r" style="left:118px;top:754px" width="780" height="403" viewBox="0 0 780 403"><rect x="1.5" y="1.5" width="777" height="400" fill="none" stroke="#444" stroke-width="3"/><rect x="78" y="3" width="1" height="397" fill="#444"/><rect x="156" y="3" width="1" height="397" fill="#444"/><rect x="234" y="3" width="1" height="397" fill="#444"/><rect x="312" y="3" width="1" height="397" fill="#444"/><rect x="389" y="3" width="1" height="397" fill="#444"/><rect x="467" y="3" width="1" height="397" fill="#444"/><rect x="545" y="3" width="1" height="397" fill="#444"/><rect x="623" y="3" width="1" height="397" fill="#444"/><rect x="701" y="3" width="1" height="397" fill="#444"/><rect x="3" y="40" width="774" height="1" fill="#444"/><rect x="3" y="80" width="774" height="1" fill="#444"/><rect x="3" y="121" width="774" height="1" fill="#444"/><rect x="3" y="161" width="774" height="1" fill="#444"/><rect x="3" y="201" width="774" height="1" fill="#444"/><rect x="3" y="241" width="774" height="1" fill="#444"/><rect x="3" y="281" width="774" height="1" fill="#444"/><rect x="3" y="321" width="774" height="1" fill="#444"/><rect x="3" y="361" width="774" height="1" fill="#444"/></svg>
<span class="t" style="left:135.57px;top:757px;font-size:34.3px;color:#404040;transform:scaleX(0.9577);">Beta Code</span>
<span class="t" style="left:135.57px;top:795px;font-size:34.3px;color:#404040;transform:scaleX(0.9573);">Not For Sale</span>
<svg class="r" style="left:118px;top:754px" width="780" height="403" viewBox="0 0 780 403"><path d="M1.0,260.4 1.4,231.5 1.8,254.9 2.3,239.0 2.7,251.9 3.1,240.4 3.5,252.8 3.9,241.6 4.4,254.3 4.8,239.4 5.2,251.2 5.6,240.0 6.0,251.1 6.5,240.4 6.9,254.3 7.3,238.7 7.7,254.0 8.1,238.6 8.6,251.4 9.0,241.4 9.4,252.7 9.8,241.1 10.2,252.5 10.7,240.0 11.1,254.4 11.5,238.7 11.9,254.8 12.3,241.6 12.8,254.7 13.2,240.0 13.6,251.8 14.0,240.0 14.4,251.2 14.9,234.2 15.3,252.6 15.7,241.1 16.1,258.1 16.5,242.0 17.0,252.3 17.4,238.5 17.8,254.8 18.2,241.9 18.6,251.1 19.1,240.6 19.5,259.4 19.9,241.0 20.3,254.4 20.7,240.5 21.2,253.4 21.6,240.1 22.0,254.6 22.4,240.6 22.8,251.9 23.3,238.5 23.7,257.0 24.1,235.1 24.5,258.1 24.9,240.4 25.4,252.3 25.8,238.1 26.2,253.6 26.6,241.2 27.0,253.3 27.5,240.8 27.9,252.4 28.3,241.1 28.7,257.8 29.1,239.4 29.6,251.8 30.0,241.3 30.4,252.7 30.8,241.8 31.2,252.3 31.7,240.5 32.1,252.5 32.5,235.2 32.9,256.4 33.3,232.7 33.8,250.7 34.2,223.4 34.6,248.1 35.0,218.8 35.4,255.8 35.9,210.5 36.3,240.2 36.7,208.4 37.1,240.0 37.5,206.7 38.0,234.1 38.4,196.7 38.8,228.9 39.2,187.9 39.6,220.6 40.1,186.5 40.5,225.9 40.9,181.0 41.3,202.8 41.7,172.7 42.2,204.9 42.6,155.6 43.0,193.3 43.4,162.7 43.8,190.4 44.3,158.0 44.7,183.1 45.1,156.6 45.5,178.2 45.9,153.7 46.4,173.6 46.8,147.6 47.2,182.4 47.6,141.0 48.0,167.6 48.5,144.8 48.9,168.9 49.3,138.8 49.7,165.2 50.1,142.7 50.6,158.5 51.0,138.5 51.4,157.7 51.8,137.0 52.2,152.3 52.7,131.2 53.1,149.5 53.5,131.1 53.9,150.6 54.3,127.8 54.8,146.4 55.2,127.7 55.6,144.6 56.0,126.2 56.4,143.6 56.9,126.7 57.3,141.3 57.7,120.2 58.1,142.2 58.5,122.3 59.0,136.2 59.4,118.4 59.8,137.8 60.2,117.3 60.6,132.4 61.1,120.1 61.5,136.3 61.9,118.5 62.3,140.4 62.7,117.4 63.2,132.0 63.6,112.2 64.0,137.7 64.4,113.3 64.8,127.1 65.3,107.6 65.7,128.2 66.1,112.5 66.5,125.6 66.9,108.9 67.4,125.1 67.8,109.8 68.2,122.6 68.6,105.9 69.0,124.4 69.5,107.0 69.9,123.1 70.3,107.3 70.7,123.4 71.1,108.4 71.6,122.9 72.0,106.2 72.4,119.0 72.8,106.6 73.2,118.9 73.7,103.8 74.1,118.1 74.5,104.3 74.9,118.8 75.3,98.1 75.8,117.2 76.2,103.3 76.6,118.3 77.0,99.8 77.4,116.9 77.9,99.9 78.3,116.0 78.7,99.7 79.1,114.7 79.5,98.0 80.0,113.2 80.4,98.5 80.8,115.8 81.2,100.1 81.6,112.1 82.1,97.4 82.5,114.3 82.9,96.1 83.3,111.7 83.7,89.9 84.2,110.5 84.6,96.2 85.0,108.7 85.4,96.3 85.8,109.0 86.3,93.4 86.7,113.5 87.1,87.2 87.5,117.0 87.9,94.8 88.4,109.6 88.8,92.9 89.2,109.2 89.6,91.9 90.0,108.1 90.5,94.2 90.9,106.1 91.3,91.1 91.7,104.7 92.1,90.7 92.6,107.2 93.0,92.5 93.4,103.3 93.8,89.5 94.2,104.6 94.7,90.1 95.1,110.3 95.5,88.3 95.9,104.4 96.3,89.9 96.8,108.1 97.2,89.5 97.6,101.8 98.0,88.4 98.4,103.1 98.9,83.7 99.3,108.2 99.7,86.0 100.1,99.6 100.5,85.4 101.0,101.5 101.4,87.5 101.8,98.6 102.2,85.2 102.6,98.4 103.1,87.0 103.5,100.7 103.9,85.0 104.3,98.9 104.7,82.0 105.2,97.1 105.6,83.6 106.0,104.3 106.4,82.4 106.8,97.1 107.3,83.9 107.7,94.5 108.1,81.5 108.5,96.3 108.9,80.1 109.4,96.8 109.8,83.3 110.2,100.4 110.6,79.1 111.0,96.3 111.5,82.1 111.9,94.7 112.3,79.2 112.7,93.2 113.1,77.8 113.6,93.2 114.0,76.9 114.4,91.2 114.8,80.3 115.2,93.4 115.7,78.7 116.1,91.4 116.5,76.9 116.9,90.4 117.3,76.6 117.8,90.8 118.2,76.7 118.6,88.8 119.0,75.5 119.4,90.3 119.9,77.5 120.3,89.7 120.7,72.8 121.1,91.9 121.5,75.7 122.0,93.7 122.4,67.2 122.8,93.6 123.2,76.2 123.6,90.6 124.1,73.7 124.5,89.1 124.9,72.5 125.3,86.7 125.7,72.8 126.2,93.3 126.6,71.8 127.0,89.7 127.4,71.1 127.8,87.5 128.3,74.4 128.7,86.5 129.1,71.2 129.5,84.4 129.9,72.2 130.4,84.3 130.8,68.1 131.2,85.1 131.6,70.3 132.0,86.4 132.5,70.4 132.9,86.9 133.3,71.9 133.7,86.0 134.1,72.2 134.6,85.5 135.0,70.1 135.4,84.3 135.8,66.0 136.2,85.1 136.7,72.1 137.1,85.2 137.5,68.6 137.9,83.3 138.3,69.0 138.8,87.4 139.2,64.6 139.6,88.6 140.0,66.7 140.4,83.3 140.9,71.3 141.3,84.4 141.7,68.9 142.1,83.5 142.5,67.8 143.0,80.9 143.4,70.4 143.8,89.3 144.2,69.7 144.6,80.0 145.1,69.4 145.5,82.0 145.9,67.0 146.3,80.7 146.7,61.2 147.2,81.4 147.6,68.8 148.0,80.7 148.4,69.1 148.8,85.7 149.3,66.3 149.7,81.0 150.1,68.2 150.5,82.2 150.9,63.6 151.4,78.7 151.8,65.7 152.2,81.8 152.6,64.7 153.0,79.2 153.5,64.8 153.9,79.2 154.3,66.6 154.7,80.8 155.1,64.5 155.6,77.5 156.0,66.9 156.4,85.0 156.8,66.8 157.2,78.2 157.7,64.9 158.1,77.2 158.5,62.9 158.9,79.7 159.3,63.7 159.8,80.0 160.2,66.8 160.6,78.3 161.0,65.2 161.4,79.7 161.9,65.4 162.3,79.4 162.7,66.2 163.1,76.2 163.5,64.9 164.0,81.0 164.4,63.9 164.8,79.7 165.2,61.9 165.6,75.8 166.1,59.8 166.5,76.0 166.9,65.6 167.3,77.2 167.7,66.3 168.2,77.8 168.6,62.9 169.0,76.3 169.4,63.5 169.8,77.2 170.3,64.3 170.7,82.5 171.1,62.9 171.5,77.0 171.9,62.8 172.4,77.5 172.8,64.3 173.2,75.9 173.6,62.5 174.0,76.7 174.5,64.5 174.9,76.8 175.3,65.6 175.7,77.1 176.1,63.0 176.6,78.6 177.0,66.1 177.4,77.1 177.8,65.1 178.2,82.4 178.7,64.7 179.1,78.4 179.5,63.6 179.9,78.5 180.3,64.6 180.8,76.1 181.2,62.4 181.6,76.1 182.0,64.9 182.4,75.8 182.9,65.7 183.3,81.4 183.7,63.2 184.1,77.2 184.5,66.0 185.0,80.0 185.4,64.2 185.8,79.9 186.2,62.4 186.6,78.2 187.1,62.2 187.5,77.3 187.9,65.8 188.3,75.5 188.7,62.9 189.2,75.0 189.6,64.0 190.0,75.2 190.4,62.2 190.8,75.3 191.3,65.5 191.7,79.6 192.1,62.4 192.5,78.5 192.9,64.7 193.4,76.6 193.8,60.4 194.2,77.6 194.6,63.8 195.0,76.8 195.5,64.0 195.9,75.6 196.3,62.5 196.7,75.5 197.1,62.8 197.6,75.8 198.0,65.8 198.4,76.4 198.8,57.6 199.2,77.8 199.7,63.4 200.1,81.5 200.5,64.3 200.9,77.1 201.3,64.1 201.8,76.0 202.2,63.7 202.6,78.4 203.0,62.8 203.4,78.5 203.9,65.5 204.3,77.6 204.7,63.5 205.1,78.5 205.5,64.2 206.0,78.1 206.4,64.0 206.8,80.9 207.2,62.8 207.6,75.0 208.1,64.5 208.5,76.2 208.9,63.9 209.3,76.4 209.7,63.3 210.2,75.9 210.6,64.5 211.0,77.3 211.4,63.8 211.8,75.6 212.3,63.7 212.7,75.1 213.1,59.3 213.5,78.3 213.9,63.2 214.4,78.0 214.8,64.3 215.2,75.3 215.6,64.6 216.0,78.2 216.5,65.3 216.9,78.7 217.3,57.8 217.7,75.5 218.1,64.5 218.6,76.4 219.0,63.5 219.4,75.2 219.8,59.9 220.2,77.7 220.7,59.7 221.1,76.4 221.5,62.9 221.9,76.4 222.3,62.6 222.8,82.0 223.2,65.9 223.6,76.8 224.0,65.7 224.4,76.6 224.9,64.0 225.3,78.5 225.7,64.0 226.1,75.9 226.5,65.5 227.0,77.2 227.4,63.1 227.8,78.1 228.2,59.9 228.6,76.0 229.1,62.7 229.5,77.9 229.9,65.5 230.3,76.3 230.7,59.6 231.2,76.3 231.6,60.1 232.0,76.3 232.4,65.0 232.8,77.4 233.3,65.6 233.7,76.5 234.1,65.1 234.5,75.6 234.9,63.7 235.4,77.7 235.8,63.9 236.2,77.2 236.6,65.8 237.0,78.1 237.5,63.8 237.9,78.2 238.3,65.2 238.7,78.5 239.1,62.2 239.6,75.5 240.0,64.7 240.4,81.4 240.8,62.8 241.2,76.8 241.7,64.3 242.1,77.0 242.5,58.2 242.9,76.9 243.3,62.6 243.8,76.9 244.2,62.8 244.6,82.2 245.0,63.2 245.4,76.6 245.9,65.1 246.3,76.9 246.7,65.6 247.1,76.0 247.5,65.3 248.0,75.5 248.4,61.9 248.8,76.6 249.2,64.1 249.6,75.2 250.1,62.5 250.5,76.8 250.9,65.7 251.3,76.0 251.7,65.6 252.2,76.6 252.6,65.0 253.0,75.5 253.4,64.1 253.8,75.6 254.3,63.0 254.7,82.3 255.1,63.1 255.5,76.5 255.9,64.8 256.4,75.4 256.8,65.0 257.2,76.2 257.6,63.2 258.0,77.4 258.5,62.9 258.9,76.9 259.3,61.3 259.7,77.2 260.1,63.1 260.6,78.4 261.0,63.2 261.4,75.0 261.8,63.2 262.2,75.6 262.7,62.3 263.1,76.6 263.5,65.4 263.9,77.3 264.3,65.4 264.8,77.2 265.2,61.8 265.6,77.8 266.0,64.3 266.4,77.1 266.9,60.7 267.3,77.5 267.7,65.9 268.1,76.0 268.5,65.6 269.0,76.3 269.4,64.3 269.8,76.0 270.2,64.3 270.6,76.1 271.1,60.5 271.5,77.0 271.9,63.7 272.3,80.4 272.7,65.3 273.2,75.8 273.6,63.7 274.0,77.6 274.4,64.4 274.8,75.0 275.3,57.3 275.7,77.0 276.1,56.9 276.5,75.4 276.9,59.6 277.4,76.6 277.8,62.5 278.2,74.8 278.6,66.0 279.0,78.1 279.5,65.8 279.9,76.0 280.3,64.9 280.7,75.3 281.1,65.7 281.6,75.0 282.0,58.3 282.4,76.8 282.8,64.1 283.2,75.1 283.7,64.1 284.1,82.2 284.5,62.5 284.9,77.5 285.3,64.5 285.8,80.2 286.2,63.2 286.6,76.6 287.0,64.6 287.4,77.6 287.9,64.2 288.3,79.9 288.7,63.8 289.1,75.7 289.5,65.6 290.0,76.7 290.4,62.6 290.8,76.1 291.2,65.8 291.6,77.7 292.1,63.2 292.5,75.6 292.9,65.3 293.3,77.2 293.7,65.6 294.2,76.6 294.6,64.1 295.0,75.6 295.4,63.5 295.8,78.3 296.3,62.6 296.7,77.5 297.1,65.5 297.5,81.8 297.9,62.4 298.4,78.1 298.8,64.3 299.2,75.6 299.6,64.4 300.0,76.5 300.5,57.2 300.9,76.0 301.3,62.3 301.7,75.1 302.1,65.1 302.6,78.4 303.0,62.6 303.4,76.0 303.8,63.9 304.2,76.3 304.7,64.9 305.1,78.3 305.5,60.9 305.9,75.6 306.3,62.3 306.8,78.3 307.2,65.6 307.6,75.0 308.0,65.0 308.4,78.4 308.9,62.5 309.3,83.4 309.7,64.5 310.1,77.3 310.5,59.1 311.0,74.9 311.4,64.7 311.8,80.3 312.2,63.9 312.6,76.1 313.1,64.2 313.5,76.5 313.9,61.3 314.3,78.0 314.7,64.5 315.2,78.0 315.6,64.6 316.0,74.8 316.4,64.2 316.8,76.5 317.3,63.3 317.7,83.2 318.1,65.3 318.5,81.5 318.9,62.8 319.4,78.1 319.8,65.8 320.2,75.2 320.6,64.3 321.0,77.8 321.5,63.4 321.9,83.3 322.3,57.8 322.7,75.9 323.1,65.9 323.6,81.3 324.0,62.4 324.4,77.5 324.8,63.6 325.2,79.6 325.7,64.0 326.1,75.6 326.5,65.5 326.9,76.5 327.3,63.5 327.8,77.6 328.2,62.7 328.6,75.7 329.0,62.6 329.4,76.3 329.9,63.3 330.3,76.1 330.7,63.0 331.1,75.1 331.5,63.2 332.0,76.3 332.4,64.4 332.8,75.2 333.2,63.7 333.6,78.4 334.1,64.3 334.5,77.1 334.9,64.1 335.3,76.7 335.7,65.3 336.2,75.9 336.6,65.7 337.0,76.5 337.4,65.2 337.8,75.3 338.3,61.3 338.7,75.6 339.1,64.3 339.5,75.9 339.9,62.9 340.4,74.8 340.8,58.0 341.2,76.0 341.6,63.6 342.0,76.7 342.5,64.0 342.9,75.0 343.3,64.6 343.7,78.8 344.1,57.7 344.6,77.0 345.0,63.3 345.4,75.0 345.8,65.1 346.2,75.3 346.7,65.1 347.1,77.9 347.5,65.4 347.9,83.5 348.3,62.8 348.8,77.5 349.2,62.3 349.6,79.6 350.0,58.3 350.4,76.3 350.9,63.1 351.3,80.0 351.7,64.6 352.1,77.3 352.5,63.2 353.0,77.4 353.4,64.1 353.8,77.9 354.2,64.6 354.6,75.7 355.1,66.0 355.5,76.6 355.9,63.8 356.3,78.5 356.7,63.8 357.2,78.2 357.6,62.9 358.0,78.6 358.4,64.5 358.8,77.3 359.3,63.1 359.7,77.9 360.1,64.8 360.5,77.3 360.9,63.9 361.4,77.2 361.8,64.9 362.2,78.2 362.6,64.9 363.0,77.6 363.5,63.5 363.9,77.5 364.3,64.6 364.7,76.5 365.1,63.1 365.6,75.2 366.0,62.4 366.4,77.0 366.8,65.9 367.2,77.2 367.7,64.8 368.1,75.3 368.5,65.0 368.9,77.9 369.3,63.1 369.8,76.8 370.2,62.7 370.6,82.9 371.0,66.0 371.4,80.8 371.9,62.6 372.3,76.0 372.7,64.6 373.1,83.8 373.5,65.7 374.0,81.5 374.4,62.7 374.8,76.1 375.2,62.9 375.6,77.2 376.1,64.5 376.5,79.6 376.9,65.1 377.3,75.6 377.7,63.1 378.2,78.5 378.6,62.6 379.0,75.6 379.4,64.4 379.8,75.0 380.3,63.9 380.7,78.0 381.1,60.3 381.5,78.2 381.9,65.4 382.4,77.2 382.8,57.6 383.2,77.2 383.6,61.3 384.0,79.2 384.5,63.0 384.9,78.1 385.3,63.9 385.7,77.5 386.1,61.7 386.6,75.7 387.0,65.5 387.4,77.0 387.8,62.6 388.2,78.2 388.7,58.0 389.1,78.2 389.5,64.4 389.9,75.2 390.3,64.4 390.8,75.1 391.2,65.9 391.6,75.7 392.0,62.9 392.4,76.6 392.9,64.9 393.3,75.2 393.7,57.2 394.1,80.0 394.5,65.9 395.0,77.5 395.4,63.6 395.8,77.9 396.2,64.5 396.6,75.4 397.1,65.2 397.5,76.0 397.9,63.9 398.3,75.4 398.7,63.4 399.2,77.4 399.6,64.5 400.0,77.1 400.4,64.0 400.8,77.4 401.3,64.0 401.7,76.6 402.1,62.5 402.5,77.9 402.9,63.3 403.4,79.5 403.8,62.3 404.2,77.5 404.6,64.5 405.0,76.9 405.5,64.0 405.9,76.0 406.3,63.7 406.7,83.7 407.1,63.7 407.6,79.8 408.0,62.8 408.4,78.1 408.8,65.6 409.2,76.7 409.7,64.9 410.1,77.0 410.5,59.1 410.9,81.1 411.3,64.0 411.8,76.2 412.2,63.0 412.6,74.8 413.0,61.3 413.4,77.5 413.9,64.6 414.3,76.1 414.7,62.4 415.1,77.2 415.5,64.8 416.0,77.3 416.4,64.1 416.8,75.6 417.2,60.9 417.6,82.9 418.1,58.9 418.5,74.8 418.9,64.9 419.3,78.2 419.7,64.5 420.2,79.0 420.6,65.6 421.0,75.7 421.4,64.3 421.8,76.4 422.3,64.7 422.7,78.1 423.1,65.3 423.5,76.0 423.9,62.9 424.4,83.2 424.8,64.3 425.2,75.5 425.6,62.7 426.0,76.9 426.5,64.0 426.9,76.3 427.3,62.9 427.7,76.9 428.1,62.5 428.6,75.4 429.0,62.8 429.4,75.2 429.8,65.4 430.2,78.6 430.7,57.7 431.1,82.8 431.5,59.8 431.9,78.2 432.3,64.8 432.8,76.5 433.2,62.7 433.6,77.5 434.0,63.4 434.4,76.6 434.9,64.8 435.3,78.3 435.7,65.6 436.1,76.7 436.5,64.7 437.0,76.1 437.4,65.0 437.8,76.0 438.2,65.3 438.6,75.3 439.1,64.0 439.5,76.8 439.9,64.8 440.3,80.8 440.7,62.8 441.2,75.8 441.6,65.6 442.0,74.9 442.4,62.7 442.8,75.9 443.3,58.7 443.7,75.1 444.1,65.4 444.5,78.0 444.9,65.0 445.4,79.9 445.8,64.6 446.2,75.8 446.6,65.0 447.0,76.1 447.5,61.1 447.9,78.2 448.3,64.3 448.7,78.5 449.1,65.1 449.6,76.7 450.0,64.7 450.4,75.7 450.8,63.7 451.2,76.6 451.7,57.7 452.1,76.6 452.5,62.4 452.9,80.9 453.3,64.3 453.8,75.2 454.2,65.0 454.6,76.8 455.0,62.9 455.4,75.1 455.9,65.8 456.3,78.3 456.7,63.5 457.1,75.7 457.5,64.6 458.0,74.9 458.4,64.4 458.8,77.9 459.2,63.7 459.6,76.5 460.1,65.8 460.5,76.7 460.9,65.1 461.3,76.1 461.7,64.9 462.2,76.3 462.6,64.8 463.0,76.7 463.4,65.7 463.8,76.0 464.3,62.4 464.7,77.4 465.1,65.6 465.5,78.3 465.9,63.6 466.4,76.9 466.8,63.5 467.2,78.1 467.6,65.2 468.0,77.0 468.5,62.7 468.9,77.4 469.3,63.4 469.7,83.4 470.1,63.6 470.6,75.5 471.0,64.2 471.4,75.2 471.8,64.4 472.2,77.6 472.7,64.3 473.1,80.0 473.5,61.7 473.9,78.0 474.3,64.0 474.8,77.5 475.2,57.7 475.6,76.0 476.0,64.8 476.4,76.2 476.9,64.8 477.3,77.8 477.7,63.1 478.1,75.7 478.5,62.5 479.0,75.3 479.4,62.5 479.8,77.8 480.2,63.0 480.6,82.1 481.1,63.3 481.5,80.0 481.9,62.2 482.3,78.2 482.7,65.5 483.2,78.4 483.6,62.2 484.0,77.5 484.4,62.5 484.8,74.9 485.3,65.9 485.7,77.0 486.1,60.3 486.5,76.8 486.9,60.8 487.4,75.1 487.8,63.6 488.2,83.4 488.6,64.7 489.0,76.3 489.5,64.9 489.9,75.7 490.3,64.3 490.7,76.2 491.1,64.6 491.6,78.0 492.0,63.0 492.4,78.1 492.8,61.7 493.2,77.7 493.7,63.2 494.1,81.8 494.5,62.2 494.9,77.1 495.3,63.5 495.8,75.7 496.2,62.5 496.6,76.3 497.0,62.9 497.4,77.7 497.9,58.4 498.3,78.9 498.7,64.8 499.1,77.6 499.5,63.8 500.0,76.1 500.4,64.3 500.8,77.3 501.2,65.3 501.6,77.7 502.1,64.1 502.5,81.5 502.9,57.0 503.3,76.2 503.7,63.1 504.2,75.6 504.6,62.3 505.0,77.0 505.4,63.0 505.8,78.0 506.3,62.9 506.7,79.6 507.1,63.5 507.5,78.3 507.9,63.3 508.4,76.8 508.8,62.5 509.2,75.8 509.6,61.8 510.0,75.5 510.5,64.8 510.9,77.9 511.3,65.8 511.7,77.8 512.1,62.7 512.6,77.1 513.0,60.7 513.4,78.3 513.8,64.2 514.2,77.4 514.7,64.2 515.1,75.1 515.5,65.4 515.9,82.0 516.3,65.6 516.8,74.9 517.2,65.4 517.6,76.2 518.0,64.3 518.4,78.0 518.9,64.0 519.3,78.6 519.7,65.8 520.1,78.4 520.5,60.8 521.0,77.7 521.4,62.6 521.8,77.4 522.2,65.1 522.6,77.2 523.1,64.0 523.5,78.4 523.9,65.3 524.3,77.1 524.7,62.5 525.2,76.7 525.6,65.2 526.0,76.5 526.4,63.1 526.8,78.5 527.3,64.6 527.7,78.9 528.1,62.4 528.5,83.3 528.9,62.2 529.4,78.3 529.8,64.8 530.2,76.0 530.6,62.0 531.0,78.2 531.5,62.9 531.9,76.5 532.3,63.0 532.7,76.8 533.1,62.8 533.6,74.9 534.0,62.6 534.4,77.3 534.8,65.0 535.2,75.3 535.7,63.8 536.1,77.8 536.5,65.0 536.9,77.8 537.3,63.8 537.8,77.8 538.2,65.1 538.6,77.7 539.0,62.7 539.4,77.1 539.9,63.8 540.3,81.6 540.7,64.4 541.1,78.3 541.5,65.3 542.0,76.8 542.4,66.0 542.8,75.9 543.2,65.0 543.6,76.2 544.1,64.2 544.5,78.0 544.9,62.7 545.3,77.7 545.7,63.5 546.2,75.8 546.6,63.8 547.0,83.1 547.4,62.9 547.8,75.6 548.3,63.3 548.7,77.5 549.1,61.0 549.5,78.4 549.9,63.3 550.4,75.8 550.8,62.9 551.2,76.5 551.6,64.7 552.0,76.2 552.5,64.0 552.9,75.9 553.3,63.7 553.7,77.7 554.1,63.5 554.6,78.1 555.0,65.2 555.4,76.7 555.8,63.6 556.2,82.3 556.7,64.8 557.1,84.3 557.5,65.9 557.9,79.1 558.3,65.4 558.8,78.9 559.2,62.9 559.6,76.8 560.0,65.2 560.4,77.0 560.9,65.4 561.3,77.6 561.7,64.8 562.1,77.6 562.5,61.9 563.0,75.6 563.4,63.4 563.8,77.9 564.2,63.5 564.6,76.4 565.1,65.8 565.5,75.8 565.9,63.9 566.3,76.1 566.7,66.0 567.2,77.9 567.6,64.7 568.0,84.5 568.4,58.0 568.8,77.6 569.3,63.3 569.7,76.6 570.1,64.2 570.5,76.6 570.9,58.6 571.4,78.3 571.8,64.6 572.2,76.2 572.6,63.9 573.0,78.7 573.5,63.1 573.9,81.7 574.3,67.0 574.7,76.7 575.1,65.9 575.6,77.1 576.0,66.6 576.4,79.8 576.8,59.8 577.2,77.1 577.7,65.3 578.1,79.2 578.5,66.9 578.9,79.4 579.3,59.2 579.8,79.0 580.2,64.8 580.6,76.4 581.0,63.7 581.4,79.8 581.9,59.4 582.3,79.0 582.7,67.4 583.1,78.1 583.5,65.8 584.0,77.3 584.4,66.8 584.8,79.7 585.2,66.5 585.6,78.4 586.1,65.1 586.5,78.4 586.9,66.1 587.3,80.5 587.7,59.5 588.2,79.2 588.6,67.3 589.0,79.7 589.4,67.0 589.8,81.2 590.3,66.7 590.7,82.2 591.1,67.4 591.5,78.0 591.9,67.1 592.4,77.2 592.8,66.3 593.2,79.8 593.6,68.1 594.0,78.2 594.5,67.7 594.9,79.9 595.3,61.3 595.7,82.6 596.1,65.6 596.6,78.1 597.0,65.8 597.4,78.9 597.8,66.9 598.2,81.5 598.7,68.1 599.1,86.4 599.5,66.7 599.9,79.3 600.3,67.2 600.8,79.6 601.2,65.7 601.6,80.9 602.0,67.4 602.4,79.5 602.9,68.3 603.3,79.5 603.7,65.3 604.1,79.9 604.5,68.9 605.0,81.3 605.4,65.8 605.8,78.7 606.2,61.4 606.6,79.6 607.1,66.9 607.5,79.9 607.9,63.5 608.3,79.6 608.7,66.7 609.2,86.8 609.6,61.9 610.0,82.4 610.4,67.8 610.8,81.0 611.3,61.3 611.7,82.2 612.1,67.6 612.5,82.0 612.9,67.5 613.4,79.5 613.8,66.2 614.2,80.3 614.6,66.5 615.0,82.7 615.5,69.3 615.9,82.7 616.3,68.5 616.7,80.1 617.1,68.6 617.6,82.3 618.0,68.8 618.4,80.1 618.8,67.0 619.2,81.4 619.7,69.1 620.1,80.9 620.5,69.4 620.9,86.0 621.3,68.7 621.8,89.6 622.2,71.1 622.6,82.5 623.0,69.9 623.4,81.7 623.9,70.9 624.3,82.8 624.7,70.6 625.1,84.6 625.5,68.0 626.0,84.0 626.4,70.2 626.8,82.8 627.2,68.5 627.6,81.7 628.1,70.2 628.5,81.8 628.9,71.2 629.3,83.2 629.7,71.0 630.2,85.6 630.6,71.9 631.0,83.2 631.4,63.9 631.8,85.3 632.3,64.6 632.7,84.9 633.1,71.7 633.5,85.9 633.9,64.5 634.4,89.9 634.8,73.2 635.2,86.1 635.6,72.2 636.0,86.6 636.5,73.9 636.9,85.5 637.3,64.8 637.7,90.1 638.1,72.0 638.6,91.7 639.0,73.3 639.4,86.3 639.8,74.2 640.2,85.2 640.7,73.2 641.1,85.5 641.5,72.7 641.9,84.8 642.3,72.4 642.8,85.4 643.2,72.1 643.6,94.1 644.0,72.8 644.4,87.8 644.9,73.3 645.3,87.7 645.7,74.3 646.1,88.3 646.5,70.6 647.0,88.7 647.4,76.3 647.8,94.1 648.2,74.5 648.6,89.5 649.1,73.3 649.5,89.6 649.9,74.5 650.3,95.5 650.7,76.6 651.2,90.3 651.6,74.1 652.0,87.4 652.4,76.6 652.8,89.0 653.3,75.9 653.7,90.8 654.1,77.7 654.5,88.2 654.9,77.9 655.4,90.5 655.8,75.2 656.2,89.7 656.6,76.1 657.0,91.2 657.5,77.0 657.9,92.5 658.3,76.4 658.7,90.3 659.1,74.2 659.6,91.2 660.0,73.8 660.4,92.5 660.8,79.8 661.2,95.0 661.7,77.2 662.1,91.8 662.5,75.7 662.9,92.0 663.3,80.6 663.8,96.5 664.2,81.1 664.6,90.9 665.0,79.1 665.4,93.4 665.9,77.8 666.3,92.8 666.7,80.1 667.1,94.5 667.5,80.3 668.0,93.5 668.4,78.7 668.8,94.0 669.2,79.7 669.6,94.0 670.1,81.6 670.5,98.2 670.9,79.2 671.3,98.9 671.7,81.5 672.2,97.2 672.6,82.7 673.0,97.5 673.4,80.1 673.8,96.9 674.3,82.7 674.7,95.5 675.1,83.2 675.5,96.4 675.9,84.4 676.4,98.9 676.8,82.4 677.2,96.3 677.6,82.5 678.0,104.6 678.5,80.5 678.9,98.2 679.3,86.0 679.7,99.3 680.1,85.7 680.6,96.8 681.0,86.2 681.4,100.6 681.8,86.5 682.2,103.8 682.7,79.1 683.1,100.7 683.5,87.9 683.9,100.2 684.3,85.8 684.8,102.4 685.2,87.7 685.6,101.2 686.0,89.7 686.4,101.5 686.9,90.2 687.3,102.1 687.7,87.1 688.1,102.5 688.5,88.9 689.0,106.0 689.4,90.6 689.8,107.3 690.2,90.3 690.6,110.0 691.1,90.3 691.5,107.5 691.9,90.1 692.3,108.2 692.7,92.8 693.2,106.0 693.6,92.9 694.0,116.0 694.4,94.3 694.8,107.7 695.3,92.9 695.7,109.5 696.1,95.1 696.5,109.4 696.9,96.9 697.4,112.2 697.8,98.0 698.2,111.6 698.6,98.1 699.0,111.6 699.5,97.6 699.9,112.0 700.3,96.7 700.7,116.7 701.1,99.3 701.6,113.2 702.0,94.1 702.4,114.9 702.8,99.5 703.2,123.4 703.7,101.6 704.1,116.3 704.5,103.1 704.9,120.6 705.3,101.9 705.8,120.2 706.2,104.9 706.6,118.5 707.0,105.6 707.4,122.6 707.9,105.5 708.3,124.8 708.7,104.9 709.1,125.5 709.5,108.2 710.0,125.9 710.4,108.8 710.8,124.0 711.2,107.8 711.6,124.6 712.1,111.0 712.5,134.8 712.9,113.7 713.3,126.8 713.7,115.3 714.2,132.7 714.6,108.0 715.0,129.2 715.4,114.1 715.8,133.6 716.3,117.0 716.7,133.5 717.1,110.1 717.5,135.6 717.9,117.2 718.4,140.0 718.8,119.6 719.2,139.3 719.6,120.8 720.0,145.8 720.5,115.4 720.9,141.7 721.3,124.2 721.7,146.3 722.1,127.6 722.6,146.6 723.0,125.2 723.4,147.6 723.8,130.7 724.2,149.2 724.7,120.9 725.1,148.5 725.5,131.2 725.9,161.3 726.3,130.4 726.8,155.3 727.2,135.1 727.6,157.9 728.0,134.9 728.4,157.3 728.9,141.1 729.3,164.5 729.7,141.8 730.1,162.5 730.5,141.8 731.0,168.4 731.4,143.0 731.8,168.1 732.2,146.1 732.6,178.6 733.1,156.4 733.5,177.0 733.9,158.2 734.3,178.9 734.7,157.1 735.2,187.3 735.6,154.6 736.0,194.3 736.4,165.2 736.8,192.5 737.3,160.6 737.7,199.6 738.1,173.0 738.5,204.1 738.9,176.8 739.4,210.5 739.8,185.2 740.2,216.1 740.6,173.8 741.0,221.2 741.5,191.6 741.9,224.3 742.3,197.5 742.7,239.2 743.1,204.7 743.6,239.2 744.0,208.2 744.4,239.2 744.8,214.4 745.2,248.4 745.7,220.6 746.1,255.1 746.5,223.0 746.9,261.7 747.3,233.8 747.8,266.1 748.2,231.2 748.6,265.8 749.0,244.4 749.4,261.2 749.9,248.9 750.3,262.0 750.7,249.6 751.1,258.9 751.5,246.6 752.0,260.2 752.4,249.6 752.8,259.9 753.2,248.5 753.6,261.9 754.1,246.7 754.5,259.6 754.9,240.7 755.3,260.4 755.7,246.9 756.2,260.0 756.6,249.3 757.0,260.2 757.4,243.9 757.8,259.0 758.3,246.0 758.7,261.5 759.1,247.4 759.5,260.4 759.9,249.2 760.4,260.6 760.8,248.9 761.2,261.0 761.6,247.9 762.0,261.0 762.5,246.2 762.9,261.6 763.3,247.2 763.7,262.3 764.1,249.2 764.6,267.1 765.0,248.9 765.4,259.0 765.8,247.8 766.2,262.2 766.7,247.3 767.1,262.2 767.5,248.6 767.9,260.0 768.3,249.4 768.8,258.7 769.2,248.9 769.6,259.6 770.0,247.1 770.4,261.8 770.9,249.3 771.3,262.4 771.7,247.7 772.1,262.2 772.5,249.6 773.0,261.7 773.4,247.9 773.8,267.2 774.2,248.3 774.6,260.7 775.1,242.7 775.5,258.6 775.9,246.7 776.3,260.0 776.7,247.2 777.2,260.7 777.6,247.2 778.0,267.5 778.4,242.0" fill="none" stroke="#33ff00" stroke-width="1.1" stroke-linejoin="bevel" shape-rendering="crispEdges"/><rect x="766.0" y="154" width="1" height="96" fill="#33ff00"/></svg>
</div>
<div id="tableD">
<div class="r" style="left:925px;top:714.8px;width:1622px;height:246.20000000000005px;background:#6a97b2;"></div>
<div class="r" style="left:927px;top:716.8px;width:1618px;height:242.20000000000005px;background:#000;"></div>
<div class="r" style="left:927px;top:716.8px;width:1618px;height:55.200000000000045px;background:#4b4b4b;"></div>
<div class="r" style="left:929px;top:719.0999999999999px;width:106px;height:50.700000000000045px;background:#3f3f3f;"></div>
<div class="r" style="left:1039px;top:719.0999999999999px;width:117px;height:50.700000000000045px;background:#3f3f3f;"></div>
<div class="r" style="left:1160px;top:719.0999999999999px;width:90px;height:50.700000000000045px;background:#3f3f3f;"></div>
<div class="r" style="left:1254px;top:719.0999999999999px;width:89.5px;height:50.700000000000045px;background:#3f3f3f;"></div>
<div class="r" style="left:1347.5px;top:719.0999999999999px;width:126.0px;height:50.700000000000045px;background:#3f3f3f;"></div>
<div class="r" style="left:1477.5px;top:719.0999999999999px;width:172.0px;height:50.700000000000045px;background:#3f3f3f;"></div>
<div class="r" style="left:1653.5px;top:719.0999999999999px;width:186.5px;height:50.700000000000045px;background:#3f3f3f;"></div>
<div class="r" style="left:1844px;top:719.0999999999999px;width:90.5px;height:50.700000000000045px;background:#3f3f3f;"></div>
<div class="r" style="left:1938.5px;top:719.0999999999999px;width:93.0px;height:50.700000000000045px;background:#3f3f3f;"></div>
<div class="r" style="left:2035.5px;top:719.0999999999999px;width:92.0px;height:50.700000000000045px;background:#3f3f3f;"></div>
<div class="r" style="left:2130.0px;top:716.8px;width:415.0px;height:55.200000000000045px;background:#3f3f3f;"></div>
<span class="t" style="left:927.99px;top:733px;font-size:24.4px;color:#fff;transform:scaleX(0.9291);">FramePart</span>
<span class="t" style="left:1039.50px;top:733px;font-size:24.4px;color:#fff;transform:scaleX(0.9291);">Allocation</span>
<span class="t" style="left:1158.69px;top:720px;font-size:24.4px;color:#fff;transform:scaleX(0.9291);">EVM</span>
<span class="t" style="left:1159.14px;top:746px;font-size:24.4px;color:#fff;transform:scaleX(0.9291);">(dB)</span>
<span class="t" style="left:1252.69px;top:720px;font-size:24.4px;color:#fff;transform:scaleX(0.9291);">Power</span>
<span class="t" style="left:1253.14px;top:746px;font-size:24.4px;color:#fff;transform:scaleX(0.9291);">(dBm)</span>
<span class="t" style="left:1346.19px;top:733px;font-size:24.4px;color:#fff;transform:scaleX(0.9291);">First Symbol</span>
<span class="t" style="left:1475.19px;top:733px;font-size:24.4px;color:#fff;transform:scaleX(0.9291);">Num. of Symbols</span>
<span class="t" style="left:1650.89px;top:733px;font-size:24.4px;color:#fff;transform:scaleX(0.9291);">Modulation Format</span>
<span class="t" style="left:1842.49px;top:733px;font-size:24.4px;color:#fff;transform:scaleX(0.9291);">BER</span>
<span class="t" style="left:1936.59px;top:720px;font-size:24.4px;color:#fff;transform:scaleX(0.9291);">Bit Errors</span>
<span class="t" style="left:1937.04px;top:746px;font-size:24.4px;color:#fff;transform:scaleX(0.9291);">(bit)</span>
<span class="t" style="left:2033.69px;top:720px;font-size:24.4px;color:#fff;transform:scaleX(0.9291);">Bit Count</span>
<span class="t" style="left:2034.14px;top:746px;font-size:24.4px;color:#fff;transform:scaleX(0.9291);">(bit)</span>
<span class="t" style="left:932.19px;top:775px;font-size:24.4px;color:#fff;transform:scaleX(0.9291);">PLFrame</span>
<span class="t" style="left:1176.72px;top:775px;font-size:24.4px;color:#fff;transform:scaleX(0.9291);">-38.65</span>
<span class="t" style="left:1282.83px;top:775px;font-size:24.4px;color:#fff;transform:scaleX(0.9291);">-1.29</span>
<span class="t" style="left:1438.03px;top:775px;font-size:24.4px;color:#fff;transform:scaleX(0.9291);">***</span>
<span class="t" style="left:1577.46px;top:775px;font-size:24.4px;color:#fff;transform:scaleX(0.9291);">16686</span>
<span class="t" style="left:1770.53px;top:775px;font-size:24.4px;color:#fff;transform:scaleX(0.9291);">Mixed</span>
<span class="t" style="left:1912.89px;top:775px;font-size:24.4px;color:#fff;transform:scaleX(0.9291);">0</span>
<span class="t" style="left:2009.89px;top:775px;font-size:24.4px;color:#fff;transform:scaleX(0.9291);">0</span>
<span class="t" style="left:2044.14px;top:775px;font-size:24.4px;color:#fff;transform:scaleX(0.9291);">38.61 k</span>
<span class="t" style="left:1100.40px;top:804px;font-size:24.4px;color:#fff;transform:scaleX(0.9291);">SOF</span>
<span class="t" style="left:1176.72px;top:804px;font-size:24.4px;color:#fff;transform:scaleX(0.9291);">-38.44</span>
<span class="t" style="left:1282.83px;top:804px;font-size:24.4px;color:#fff;transform:scaleX(0.9291);">-1.22</span>
<span class="t" style="left:1451.89px;top:804px;font-size:24.4px;color:#fff;transform:scaleX(0.9291);">0</span>
<span class="t" style="left:1615.28px;top:804px;font-size:24.4px;color:#fff;transform:scaleX(0.9291);">26</span>
<span class="t" style="left:1768.00px;top:804px;font-size:24.4px;color:#fff;transform:scaleX(0.9291);">QPSK</span>
<span class="t" style="left:1899.03px;top:804px;font-size:24.4px;color:#fff;transform:scaleX(0.9291);">***</span>
<span class="t" style="left:1996.03px;top:804px;font-size:24.4px;color:#fff;transform:scaleX(0.9291);">***</span>
<span class="t" style="left:2092.03px;top:804px;font-size:24.4px;color:#fff;transform:scaleX(0.9291);">***</span>
<span class="t" style="left:1038.65px;top:834px;font-size:24.4px;color:#fff;transform:scaleX(0.9291);">PLSCODE</span>
<span class="t" style="left:1176.72px;top:834px;font-size:24.4px;color:#fff;transform:scaleX(0.9291);">-38.92</span>
<span class="t" style="left:1282.83px;top:834px;font-size:24.4px;color:#fff;transform:scaleX(0.9291);">-1.26</span>
<span class="t" style="left:1439.28px;top:834px;font-size:24.4px;color:#fff;transform:scaleX(0.9291);">26</span>
<span class="t" style="left:1615.28px;top:834px;font-size:24.4px;color:#fff;transform:scaleX(0.9291);">64</span>
<span class="t" style="left:1768.00px;top:834px;font-size:24.4px;color:#fff;transform:scaleX(0.9291);">QPSK</span>
<span class="t" style="left:1899.03px;top:834px;font-size:24.4px;color:#fff;transform:scaleX(0.9291);">***</span>
<span class="t" style="left:1996.03px;top:834px;font-size:24.4px;color:#fff;transform:scaleX(0.9291);">***</span>
<span class="t" style="left:2092.03px;top:834px;font-size:24.4px;color:#fff;transform:scaleX(0.9291);">***</span>
<span class="t" style="left:1102.90px;top:863px;font-size:24.4px;color:#fff;transform:scaleX(0.9291);">Pilot</span>
<span class="t" style="left:1176.72px;top:863px;font-size:24.4px;color:#fff;transform:scaleX(0.9291);">-38.70</span>
<span class="t" style="left:1282.83px;top:863px;font-size:24.4px;color:#fff;transform:scaleX(0.9291);">-1.33</span>
<span class="t" style="left:1414.07px;top:863px;font-size:24.4px;color:#fff;transform:scaleX(0.9291);">1530</span>
<span class="t" style="left:1602.67px;top:863px;font-size:24.4px;color:#fff;transform:scaleX(0.9291);">396</span>
<span class="t" style="left:1768.00px;top:863px;font-size:24.4px;color:#fff;transform:scaleX(0.9291);">QPSK</span>
<span class="t" style="left:1899.03px;top:863px;font-size:24.4px;color:#fff;transform:scaleX(0.9291);">***</span>
<span class="t" style="left:1996.03px;top:863px;font-size:24.4px;color:#fff;transform:scaleX(0.9291);">***</span>
<span class="t" style="left:2092.03px;top:863px;font-size:24.4px;color:#fff;transform:scaleX(0.9291);">***</span>
<span class="t" style="left:1099.11px;top:892px;font-size:24.4px;color:#fff;transform:scaleX(0.9291);">Data</span>
<span class="t" style="left:1176.72px;top:892px;font-size:24.4px;color:#fff;transform:scaleX(0.9291);">-38.65</span>
<span class="t" style="left:1282.83px;top:892px;font-size:24.4px;color:#fff;transform:scaleX(0.9291);">-1.29</span>
<span class="t" style="left:1439.28px;top:892px;font-size:24.4px;color:#fff;transform:scaleX(0.9291);">90</span>
<span class="t" style="left:1577.46px;top:892px;font-size:24.4px;color:#fff;transform:scaleX(0.9291);">16200</span>
<span class="t" style="left:1770.51px;top:892px;font-size:24.4px;color:#fff;transform:scaleX(0.9291);">APSK</span>
<span class="t" style="left:1912.89px;top:892px;font-size:24.4px;color:#fff;transform:scaleX(0.9291);">0</span>
<span class="t" style="left:2009.89px;top:892px;font-size:24.4px;color:#fff;transform:scaleX(0.9291);">0</span>
<span class="t" style="left:2044.14px;top:892px;font-size:24.4px;color:#fff;transform:scaleX(0.9291);">38.61 k</span>
</div>
<div id="tableF">
<div class="r" style="left:925px;top:1022.8px;width:1622px;height:192.20000000000005px;background:#6a97b2;"></div>
<div class="r" style="left:927px;top:1024.8px;width:1618px;height:188.20000000000005px;background:#000;"></div>
<div class="r" style="left:927px;top:1024.8px;width:1618px;height:54.40000000000009px;background:#4b4b4b;"></div>
<div class="r" style="left:929px;top:1027.1px;width:90.5px;height:49.90000000000009px;background:#3f3f3f;"></div>
<div class="r" style="left:1023.5px;top:1027.1px;width:90.0px;height:49.90000000000009px;background:#3f3f3f;"></div>
<div class="r" style="left:1117.5px;top:1027.1px;width:89.5px;height:49.90000000000009px;background:#3f3f3f;"></div>
<div class="r" style="left:1211px;top:1027.1px;width:128.5px;height:49.90000000000009px;background:#3f3f3f;"></div>
<div class="r" style="left:1343.5px;top:1027.1px;width:89.5px;height:49.90000000000009px;background:#3f3f3f;"></div>
<div class="r" style="left:1437px;top:1027.1px;width:154px;height:49.90000000000009px;background:#3f3f3f;"></div>
<div class="r" style="left:1595px;top:1027.1px;width:95px;height:49.90000000000009px;background:#3f3f3f;"></div>
<div class="r" style="left:1694px;top:1027.1px;width:120.5px;height:49.90000000000009px;background:#3f3f3f;"></div>
<div class="r" style="left:1818.5px;top:1027.1px;width:99.5px;height:49.90000000000009px;background:#3f3f3f;"></div>
<div class="r" style="left:1922px;top:1027.1px;width:121px;height:49.90000000000009px;background:#3f3f3f;"></div>
<div class="r" style="left:2047px;top:1027.1px;width:89px;height:49.90000000000009px;background:#3f3f3f;"></div>
<div class="r" style="left:2140px;top:1027.1px;width:92.5px;height:49.90000000000009px;background:#3f3f3f;"></div>
<div class="r" style="left:2236.5px;top:1027.1px;width:92.5px;height:49.90000000000009px;background:#3f3f3f;"></div>
<div class="r" style="left:2331.5px;top:1024.8px;width:213.5px;height:54.40000000000009px;background:#3f3f3f;"></div>
<span class="t" style="left:928.67px;top:1041px;font-size:24.4px;color:#fff;transform:scaleX(0.9291);">Carrier</span>
<span class="t" style="left:1021.87px;top:1028px;font-size:24.4px;color:#fff;transform:scaleX(0.9291);">Center</span>
<span class="t" style="left:1021.64px;top:1054px;font-size:24.4px;color:#fff;transform:scaleX(0.9291);">(Hz)</span>
<span class="t" style="left:1115.98px;top:1028px;font-size:24.4px;color:#fff;transform:scaleX(0.9291);">Offset</span>
<span class="t" style="left:1115.64px;top:1054px;font-size:24.4px;color:#fff;transform:scaleX(0.9291);">(Hz)</span>
<span class="t" style="left:1209.78px;top:1028px;font-size:24.4px;color:#fff;transform:scaleX(0.9291);">Symbol Rate</span>
<span class="t" style="left:1209.44px;top:1054px;font-size:24.4px;color:#fff;transform:scaleX(0.9291);">(Hz)</span>
<span class="t" style="left:1341.19px;top:1028px;font-size:24.4px;color:#fff;transform:scaleX(0.9291);">EVM</span>
<span class="t" style="left:1341.64px;top:1054px;font-size:24.4px;color:#fff;transform:scaleX(0.9291);">(dB)</span>
<span class="t" style="left:1435.27px;top:1028px;font-size:24.4px;color:#fff;transform:scaleX(0.9291);">Channel Power</span>
<span class="t" style="left:1435.04px;top:1054px;font-size:24.4px;color:#fff;transform:scaleX(0.9291);">(dBm)</span>
<span class="t" style="left:1592.49px;top:1028px;font-size:24.4px;color:#fff;transform:scaleX(0.9291);">Freq Err</span>
<span class="t" style="left:1592.94px;top:1054px;font-size:24.4px;color:#fff;transform:scaleX(0.9291);">(Hz)</span>
<span class="t" style="left:1692.18px;top:1028px;font-size:24.4px;color:#fff;transform:scaleX(0.9291);">Sym Clk Err</span>
<span class="t" style="left:1691.84px;top:1054px;font-size:24.4px;color:#fff;transform:scaleX(0.9291);">(ppm)</span>
<span class="t" style="left:1815.89px;top:1028px;font-size:24.4px;color:#fff;transform:scaleX(0.9291);">Mag Error</span>
<span class="t" style="left:1816.34px;top:1054px;font-size:24.4px;color:#fff;transform:scaleX(0.9291);">(%)</span>
<span class="t" style="left:1919.69px;top:1028px;font-size:24.4px;color:#fff;transform:scaleX(0.9291);">Phase Error</span>
<span class="t" style="left:1920.14px;top:1054px;font-size:24.4px;color:#fff;transform:scaleX(0.9291);">(deg)</span>
<span class="t" style="left:2043.59px;top:1041px;font-size:24.4px;color:#fff;transform:scaleX(0.9291);">BER</span>
<span class="t" style="left:2137.59px;top:1028px;font-size:24.4px;color:#fff;transform:scaleX(0.9291);">Bit Errors</span>
<span class="t" style="left:2138.04px;top:1054px;font-size:24.4px;color:#fff;transform:scaleX(0.9291);">(bit)</span>
<span class="t" style="left:2234.69px;top:1028px;font-size:24.4px;color:#fff;transform:scaleX(0.9291);">Bit Count</span>
<span class="t" style="left:2235.14px;top:1054px;font-size:24.4px;color:#fff;transform:scaleX(0.9291);">(bit)</span>
<span class="t" style="left:964.45px;top:1083px;font-size:24.4px;color:#fff;transform:scaleX(0.9291);">CC0</span>
<span class="t" style="left:1054.65px;top:1083px;font-size:24.4px;color:#fff;transform:scaleX(0.9291);">10 G</span>
<span class="t" style="left:1184.69px;top:1083px;font-size:24.4px;color:#fff;transform:scaleX(0.9291);">0</span>
<span class="t" style="left:1266.79px;top:1083px;font-size:24.4px;color:#fff;transform:scaleX(0.9291);">400 M</span>
<span class="t" style="left:1359.02px;top:1083px;font-size:24.4px;color:#fff;transform:scaleX(0.9291);">-38.65</span>
<span class="t" style="left:1529.63px;top:1083px;font-size:24.4px;color:#fff;transform:scaleX(0.9291);">-1.29</span>
<span class="t" style="left:1598.39px;top:1083px;font-size:24.4px;color:#fff;transform:scaleX(0.9291);">991.1 m</span>
<span class="t" style="left:1727.94px;top:1083px;font-size:24.4px;color:#fff;transform:scaleX(0.9291);">-18.1 m</span>
<span class="t" style="left:1851.57px;top:1083px;font-size:24.4px;color:#fff;transform:scaleX(0.9291);">0.797</span>
<span class="t" style="left:1970.29px;top:1083px;font-size:24.4px;color:#fff;transform:scaleX(0.9291);">866 m</span>
<span class="t" style="left:2113.69px;top:1083px;font-size:24.4px;color:#fff;transform:scaleX(0.9291);">0</span>
<span class="t" style="left:2210.19px;top:1083px;font-size:24.4px;color:#fff;transform:scaleX(0.9291);">0</span>
<span class="t" style="left:2244.94px;top:1083px;font-size:24.4px;color:#fff;transform:scaleX(0.9291);">772.2 k</span>
</div>
<div id="statusbar">
<div class="r" style="left:0px;top:1228px;width:2560px;height:43px;background:#0078d0;"></div>
<svg class="r" style="left:24px;top:1238px" width="15" height="26" viewBox="0 0 15 26"><path d="M0.3 8 L7.2 0.8 L14 8 Z M0.3 17 H14 L7.2 24.2 Z" fill="#fff"/></svg>
<span class="t" style="left:49.63px;top:1242px;font-size:21.4px;color:#fff;transform:scaleX(0.9193);">Meas01:</span>
<span class="t" style="left:139.70px;top:1242px;font-size:21.4px;color:#fff;transform:scaleX(0.9499);">Average Complete</span>
<div class="r" style="left:2045.8px;top:1228px;width:1.5px;height:43px;background:#e6f0fa;"></div>
<div class="r" style="left:2049.2px;top:1228px;width:1.7px;height:43px;background:#e6f0fa;"></div>
<div class="r" style="left:2293.5px;top:1228px;width:1.5px;height:43px;background:#e6f0fa;"></div>
<div class="r" style="left:2296.9px;top:1228px;width:1.7px;height:43px;background:#e6f0fa;"></div>
<span class="t" style="left:2070.62px;top:1242px;font-size:21.4px;color:#fff;transform:scaleX(0.9257);">Meas01:</span>
<span class="t" style="left:2162.33px;top:1242px;font-size:21.4px;color:#fff;transform:scaleX(0.8019);">EXT REF</span>
<svg class="r" style="left:2255.5px;top:1238px" width="15" height="26" viewBox="0 0 15 26"><path d="M0.3 8 L7.2 0.8 L14 8 Z M0.3 17 H14 L7.2 24.2 Z" fill="#fff"/></svg>
<span class="t" style="left:2318.10px;top:1242px;font-size:21.4px;color:#fff;transform:scaleX(0.9320);">Meas01:</span>
<span class="t" style="left:2418.78px;top:1242px;font-size:21.4px;color:#fff;transform:scaleX(0.8612);">CAL: OK</span>
<svg class="r" style="left:2522.5px;top:1238px" width="15" height="26" viewBox="0 0 15 26"><path d="M0.3 8 L7.2 0.8 L14 8 Z M0.3 17 H14 L7.2 24.2 Z" fill="#fff"/></svg>
</div>
</body></html>
